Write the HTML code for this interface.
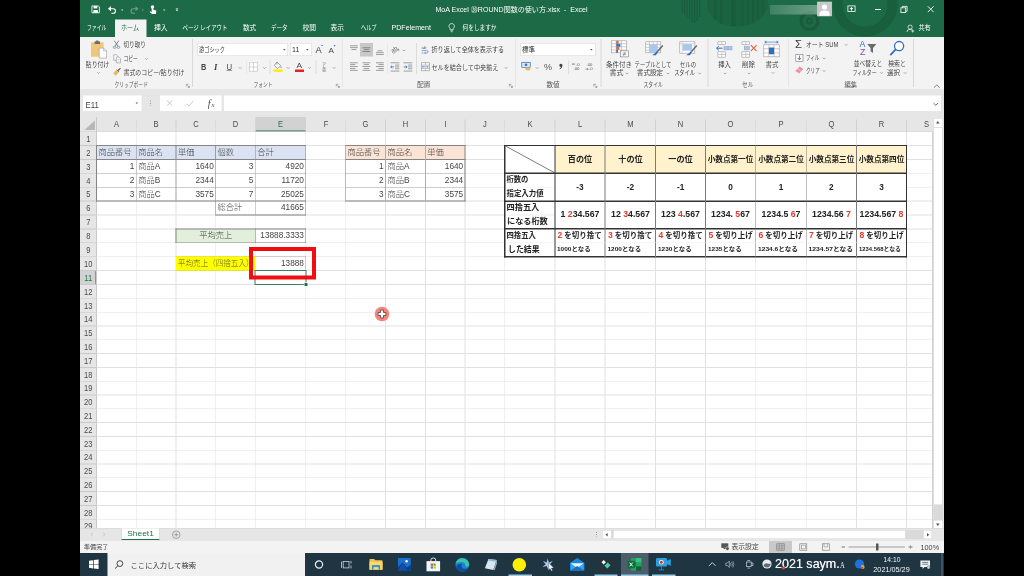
<!DOCTYPE html>
<html lang="ja"><head><meta charset="utf-8"><title>MoA Excel ROUND関数の使い方.xlsx - Excel</title>
<style>
html,body{margin:0;padding:0;background:#000;}
body{width:1024px;height:576px;position:relative;overflow:hidden;font-family:"Liberation Sans","Noto Sans CJK JP",sans-serif;}
.a{position:absolute;box-sizing:border-box;}
.t{position:absolute;white-space:nowrap;font-family:"Liberation Sans","Noto Sans CJK JP",sans-serif;}
svg{overflow:visible;}
#w{position:absolute;left:-8px;top:-8px;width:1040px;height:592px;overflow:hidden;filter:blur(0.5px);background:#000;}
#i{position:absolute;left:8px;top:8px;width:2048px;height:1152px;transform:scale(0.5);transform-origin:0 0;}
.r{color:#e03a2c;}
.b{font-size:17.2px;}
</style></head>
<body>
<div id="w"><div id="i">
<div class="a" style="left:160.00px;top:0.00px;width:1728.00px;height:1152.00px;background:#fff;"></div>
<div class="a" style="left:160.00px;top:-16.00px;width:1728.00px;height:90.40px;background:#1d6a46;"></div>
<svg class="a" style="left:1360.00px;top:0.00px;clip-path:inset(0 0 0 0);" width="528.00" height="74.40" viewBox="0 0 264 37.2">
<g fill="#195c3c">
<rect x="1.5" y="0" width="1.2" height="13"/><rect x="4" y="0" width="1.2" height="15"/><rect x="6.5" y="0" width="1.2" height="17"/><rect x="9" y="0" width="1.2" height="19"/><rect x="11.5" y="0" width="1.2" height="22"/><rect x="14" y="0" width="1.2" height="23"/><rect x="16.5" y="0" width="1.2" height="21"/><rect x="19" y="0" width="1.2" height="17"/>
<path d="M27 0 L27 6 Q31 25 57 26.6 Q83 25 88 6 L88 0 Z" opacity="0.55"/>
<rect x="51" y="0" width="5" height="26.4"/><rect x="40" y="0" width="2.4" height="24"/><rect x="34" y="0" width="2" height="20"/><rect x="62" y="0" width="1.6" height="26"/><rect x="67" y="0" width="1.6" height="25"/><rect x="72" y="0" width="1.6" height="23"/><rect x="77" y="0" width="1.6" height="20"/><rect x="82" y="0" width="1.6" height="15"/>
</g>
<g fill="none" stroke="#195c3c">
<circle cx="129.5" cy="21" r="8.4" stroke-width="3.4"/><circle cx="129.5" cy="21" r="2.4" stroke-width="2"/>
<circle cx="185" cy="4" r="27.5" stroke-width="10" opacity="0.8"/>
</g>
</svg>
<svg class="a" style="left:183.20px;top:10.80px;" width="16.60" height="15.40" viewBox="0 0 8 7.4"><path d="M0.4 0.4H6.6L7.6 1.4V7H0.4Z" fill="none" stroke="#fff" stroke-width="0.8"/><rect x="2" y="0.6" width="3.6" height="2.2" fill="#fff"/><rect x="1.8" y="4.4" width="4.4" height="2.6" fill="#fff"/></svg>
<svg class="a" style="left:216.00px;top:11.00px;" width="17.00" height="16.00" viewBox="0 0 8.5 8"><path d="M1 3.2H5.2A2.3 2.3 0 0 1 5.2 7.8H3.4" fill="none" stroke="#fff" stroke-width="1.1"/><path d="M0 3.2L3 0.6V5.8Z" fill="#fff"/></svg>
<svg class="a" style="left:241.60px;top:18.72px;" width="4.80" height="2.88" viewBox="0 0 3 1.8"><path d="M0 0 L3 0 L1.5 1.8 Z" fill="#cfe3d8"/></svg>
<svg class="a" style="left:260.00px;top:11.00px;" width="17.00" height="16.00" viewBox="0 0 8.5 8"><g opacity="0.35"><path d="M7.5 3.2H3.3A2.3 2.3 0 0 0 3.3 7.8H5.1" fill="none" stroke="#fff" stroke-width="1.1"/><path d="M8.5 3.2L5.5 0.6V5.8Z" fill="#fff"/></g></svg>
<svg class="a" style="left:282.60px;top:18.72px;" width="4.80" height="2.88" viewBox="0 0 3 1.8"><path d="M0 0 L3 0 L1.5 1.8 Z" fill="#6fa58a"/></svg>
<svg class="a" style="left:299.00px;top:10.00px;" width="14.00" height="18.00" viewBox="0 0 7 9"><circle cx="3" cy="2" r="1.7" fill="#fff"/><path d="M2.2 3V7L0.6 6.2L0.2 7L2.6 9H6.4L6.8 5.6L3.8 4.8V3Z" fill="#fff"/></svg>
<svg class="a" style="left:325.60px;top:18.72px;" width="4.80" height="2.88" viewBox="0 0 3 1.8"><path d="M0 0 L3 0 L1.5 1.8 Z" fill="#cfe3d8"/></svg>
<svg class="a" style="left:351.20px;top:17.20px;" width="6.00" height="6.00" viewBox="0 0 3 3"><rect x="0.3" y="0" width="2.4" height="0.7" fill="#fff"/><path d="M0.2 1.3H2.8L1.5 2.8Z" fill="#fff"/></svg>
<div id="t1" class="t" style="left:1023.00px;top:9.02px;height:19.80px;line-height:19.80px;font-size:13.20px;color:#fff;font-weight:400;transform-origin:center center;transform:translateX(-50%) scaleX(1.0693);">MoA Excel ㉘ROUND関数の使い方.xlsx&nbsp; -&nbsp; Excel</div>
<div class="a" style="left:1540.00px;top:10.00px;width:95.00px;height:19.00px;background:linear-gradient(90deg,rgba(255,255,255,0.16),rgba(255,255,255,0.36));filter:blur(1.20px);"></div>
<div class="a" style="left:1635.40px;top:4.00px;width:28.00px;height:28.00px;background:#e9e9e9;"></div>
<svg class="a" style="left:1635.40px;top:4.00px;background:#c9c9c9;" width="28.00" height="28.00" viewBox="0 0 14 14"><circle cx="7" cy="5" r="2.6" fill="#fff"/><path d="M2 14V11.5Q2 8.4 7 8.4Q12 8.4 12 11.5V14Z" fill="#fff"/><rect x="0" y="0" width="14" height="14" fill="none" stroke="#cfcfcf" stroke-width="0.6"/></svg>
<svg class="a" style="left:1695.00px;top:11.00px;" width="16.00" height="14.00" viewBox="0 0 8 7"><rect x="0.4" y="0.4" width="7.2" height="5.6" fill="none" stroke="#fff" stroke-width="0.8"/><path d="M4 1.6L5.8 3.4H4.6V5H3.4V3.4H2.2Z" fill="#fff"/></svg>
<div class="a" style="left:1749.60px;top:18.00px;width:12.40px;height:1.60px;background:#fff;"></div>
<svg class="a" style="left:1801.00px;top:11.60px;" width="14.00" height="14.00" viewBox="0 0 7 7"><rect x="0.4" y="1.8" width="4.8" height="4.8" fill="none" stroke="#fff" stroke-width="0.8"/><path d="M1.8 1.8V0.4H6.6V5.2H5.2" fill="none" stroke="#fff" stroke-width="0.8"/></svg>
<svg class="a" style="left:1855.00px;top:12.00px;" width="12.80" height="12.80" viewBox="0 0 6.4 6.4"><path d="M0.3 0.3L6.1 6.1M6.1 0.3L0.3 6.1" stroke="#fff" stroke-width="0.9"/></svg>
<svg class="a" style="left:1813.00px;top:49.00px;" width="16.00" height="16.00" viewBox="0 0 8 8"><circle cx="3.6" cy="2.6" r="2.1" fill="none" stroke="#fff" stroke-width="0.7"/><path d="M0.4 7.6Q0.6 4.8 3.6 4.8Q5 4.8 5.6 5.4" fill="none" stroke="#fff" stroke-width="0.7"/><path d="M6.2 5V8M4.7 6.5H7.7" stroke="#fff" stroke-width="0.7"/></svg>
<div id="t2" class="t" style="left:1836.60px;top:45.47px;height:19.20px;line-height:19.20px;font-size:12.80px;color:#fff;font-weight:400;transform-origin:left center;transform:scaleX(0.9534);">共有</div>
<div class="a" style="left:230.00px;top:39.00px;width:62.60px;height:36.00px;background:#f3f3f3;"></div>
<div id="t3" class="t" style="left:174.00px;top:46.33px;height:20.25px;line-height:20.25px;font-size:13.50px;color:#fff;font-weight:400;transform-origin:left center;transform:scaleX(0.7148);">ファイル</div>
<div id="t4" class="t" style="left:242.00px;top:46.33px;height:20.25px;line-height:20.25px;font-size:13.50px;color:#1d6a46;font-weight:400;transform-origin:left center;transform:scaleX(0.8975);">ホーム</div>
<div id="t5" class="t" style="left:307.50px;top:46.33px;height:20.25px;line-height:20.25px;font-size:13.50px;color:#fff;font-weight:400;transform-origin:left center;transform:scaleX(1.0148);">挿入</div>
<div id="t6" class="t" style="left:365.00px;top:46.33px;height:20.25px;line-height:20.25px;font-size:13.50px;color:#fff;font-weight:400;transform-origin:left center;transform:scaleX(0.8073);">ページ レイアウト</div>
<div id="t7" class="t" style="left:486.00px;top:46.33px;height:20.25px;line-height:20.25px;font-size:13.50px;color:#fff;font-weight:400;transform-origin:left center;transform:scaleX(0.9778);">数式</div>
<div id="t8" class="t" style="left:542.00px;top:46.33px;height:20.25px;line-height:20.25px;font-size:13.50px;color:#fff;font-weight:400;transform-origin:left center;transform:scaleX(0.8148);">データ</div>
<div id="t9" class="t" style="left:605.00px;top:46.33px;height:20.25px;line-height:20.25px;font-size:13.50px;color:#fff;font-weight:400;transform-origin:left center;">校閲</div>
<div id="t10" class="t" style="left:661.00px;top:46.33px;height:20.25px;line-height:20.25px;font-size:13.50px;color:#fff;font-weight:400;transform-origin:left center;">表示</div>
<div id="t11" class="t" style="left:722.00px;top:46.33px;height:20.25px;line-height:20.25px;font-size:13.50px;color:#fff;font-weight:400;transform-origin:left center;transform:scaleX(0.7654);">ヘルプ</div>
<div id="t12" class="t" style="left:783.00px;top:46.33px;height:20.25px;line-height:20.25px;font-size:13.50px;color:#fff;font-weight:400;transform-origin:left center;transform:scaleX(1.0529);">PDFelement</div>
<div id="t13" class="t" style="left:925.00px;top:46.33px;height:20.25px;line-height:20.25px;font-size:13.50px;color:#fff;font-weight:400;transform-origin:left center;transform:scaleX(0.8395);">何をしますか</div>
<svg class="a" style="left:897.00px;top:46.00px;" width="12.80" height="18.80" viewBox="0 0 6.4 9.4"><path d="M3.2 0.5A2.7 2.7 0 0 1 4.8 5.4V6.8H1.6V5.4A2.7 2.7 0 0 1 3.2 0.5Z" fill="none" stroke="#fff" stroke-width="0.7"/><path d="M1.9 7.8H4.5M2.3 8.8H4.1" stroke="#fff" stroke-width="0.6"/></svg>
<div class="a" style="left:160.00px;top:74.40px;width:1728.00px;height:103.60px;background:#f3f3f3;"></div>
<div class="a" style="left:160.00px;top:178.00px;width:1728.00px;height:56.00px;background:#e6e6e6;"></div>
<div class="a" style="left:384.20px;top:78.00px;width:1.60px;height:96.00px;background:#d9d9d9;"></div>
<div class="a" style="left:683.80px;top:78.00px;width:1.60px;height:96.00px;background:#d9d9d9;"></div>
<div class="a" style="left:1030.80px;top:78.00px;width:1.60px;height:96.00px;background:#d9d9d9;"></div>
<div class="a" style="left:1201.00px;top:78.00px;width:1.60px;height:96.00px;background:#d9d9d9;"></div>
<div class="a" style="left:1415.40px;top:78.00px;width:1.60px;height:96.00px;background:#d9d9d9;"></div>
<div class="a" style="left:1576.80px;top:78.00px;width:1.60px;height:96.00px;background:#d9d9d9;"></div>
<div class="a" style="left:1826.40px;top:78.00px;width:1.60px;height:96.00px;background:#d9d9d9;"></div>
<div id="t14" class="t" style="left:228.60px;top:159.27px;height:19.20px;line-height:19.20px;font-size:12.80px;color:#555;font-weight:400;transform-origin:left center;transform:scaleX(0.7457);">クリップボード</div>
<div id="t15" class="t" style="left:507.00px;top:159.27px;height:19.20px;line-height:19.20px;font-size:12.80px;color:#555;font-weight:400;transform-origin:left center;transform:scaleX(0.7424);">フォント</div>
<div id="t16" class="t" style="left:834.00px;top:159.27px;height:19.20px;line-height:19.20px;font-size:12.80px;color:#555;font-weight:400;transform-origin:left center;transform:scaleX(1.0549);">配置</div>
<div id="t17" class="t" style="left:1093.00px;top:159.27px;height:19.20px;line-height:19.20px;font-size:12.80px;color:#555;font-weight:400;transform-origin:left center;transform:scaleX(1.0315);">数値</div>
<div id="t18" class="t" style="left:1287.20px;top:159.27px;height:19.20px;line-height:19.20px;font-size:12.80px;color:#555;font-weight:400;transform-origin:left center;transform:scaleX(0.7580);">スタイル</div>
<div id="t19" class="t" style="left:1484.00px;top:159.27px;height:19.20px;line-height:19.20px;font-size:12.80px;color:#555;font-weight:400;transform-origin:left center;transform:scaleX(0.8908);">セル</div>
<div id="t20" class="t" style="left:1688.80px;top:159.27px;height:19.20px;line-height:19.20px;font-size:12.80px;color:#555;font-weight:400;transform-origin:left center;transform:scaleX(0.9846);">編集</div>
<svg class="a" style="left:372.40px;top:167.60px;" width="7.60" height="7.60" viewBox="0 0 3.8 3.8"><path d="M0.3 2.4V0.3H2.4" fill="none" stroke="#777" stroke-width="0.6"/><path d="M1.4 1.4L3.2 3.2M3.4 1.8V3.4H1.8" fill="none" stroke="#777" stroke-width="0.6"/></svg>
<svg class="a" style="left:672.20px;top:167.60px;" width="7.60" height="7.60" viewBox="0 0 3.8 3.8"><path d="M0.3 2.4V0.3H2.4" fill="none" stroke="#777" stroke-width="0.6"/><path d="M1.4 1.4L3.2 3.2M3.4 1.8V3.4H1.8" fill="none" stroke="#777" stroke-width="0.6"/></svg>
<svg class="a" style="left:1018.40px;top:167.60px;" width="7.60" height="7.60" viewBox="0 0 3.8 3.8"><path d="M0.3 2.4V0.3H2.4" fill="none" stroke="#777" stroke-width="0.6"/><path d="M1.4 1.4L3.2 3.2M3.4 1.8V3.4H1.8" fill="none" stroke="#777" stroke-width="0.6"/></svg>
<svg class="a" style="left:1187.20px;top:167.60px;" width="7.60" height="7.60" viewBox="0 0 3.8 3.8"><path d="M0.3 2.4V0.3H2.4" fill="none" stroke="#777" stroke-width="0.6"/><path d="M1.4 1.4L3.2 3.2M3.4 1.8V3.4H1.8" fill="none" stroke="#777" stroke-width="0.6"/></svg>
<svg class="a" style="left:1867.20px;top:168.80px;" width="13.20" height="7.20" viewBox="0 0 6.6 3.6"><path d="M0.4 3.2L3.3 0.5L6.2 3.2" fill="none" stroke="#666" stroke-width="0.8"/></svg>
<svg class="a" style="left:181.80px;top:81.20px;" width="32.00" height="36.00" viewBox="0 0 16 18">
<rect x="0" y="1.8" width="12.6" height="14.4" fill="#eec77c"/>
<rect x="3.6" y="0.9" width="5.4" height="2.6" fill="#6a6a6a"/><rect x="5.2" y="0" width="2.2" height="1.4" fill="#6a6a6a"/>
<path d="M8.2 7.6H12.6L15.6 10.4V17.6H8.2Z" fill="#fff" stroke="#9a9a9a" stroke-width="0.6"/><path d="M12.6 7.6V10.4H15.6" fill="none" stroke="#9a9a9a" stroke-width="0.6"/></svg>
<div id="t21" class="t" style="left:194.60px;top:118.53px;height:20.25px;line-height:20.25px;font-size:13.50px;color:#444;font-weight:400;transform-origin:center center;transform:translateX(-50%) scaleX(0.8667);">貼り付け</div>
<svg class="a" style="left:194.40px;top:144.40px;" width="6.40" height="4.00" viewBox="0 0 4 2.4"><path d="M0.4 0.3 L2 1.9 L3.6 0.3" fill="none" stroke="#777" stroke-width="0.8"/></svg>
<svg class="a" style="left:226.40px;top:81.20px;" width="14.00" height="16.80" viewBox="0 0 7 8.4"><path d="M1.2 0.2L5 5.6M5.8 0.2L2 5.6" stroke="#555" stroke-width="0.7" fill="none"/><ellipse cx="1.6" cy="6.8" rx="1.3" ry="1.1" fill="none" stroke="#4a86c8" stroke-width="0.7"/><ellipse cx="5.4" cy="6.8" rx="1.3" ry="1.1" fill="none" stroke="#4a86c8" stroke-width="0.7"/></svg>
<div id="t22" class="t" style="left:247.20px;top:80.13px;height:20.25px;line-height:20.25px;font-size:13.50px;color:#444;font-weight:400;transform-origin:left center;transform:scaleX(0.8259);">切り取り</div>
<svg class="a" style="left:226.80px;top:108.60px;" width="14.80" height="17.20" viewBox="0 0 7.4 8.6"><path d="M0.3 0.3H3L4.4 1.7V5.8H0.3Z" fill="#fff" stroke="#8a8a8a" stroke-width="0.6"/><path d="M2.8 2.6H5.6L7 4V8.3H2.8Z" fill="#fff" stroke="#8a8a8a" stroke-width="0.6"/><path d="M3.6 5H6.2M3.6 6.4H6.2" stroke="#9cc3e6" stroke-width="0.5"/></svg>
<div id="t23" class="t" style="left:247.20px;top:107.53px;height:20.25px;line-height:20.25px;font-size:13.50px;color:#444;font-weight:400;transform-origin:left center;transform:scaleX(0.7111);">コピー</div>
<svg class="a" style="left:289.60px;top:116.00px;" width="6.40" height="4.00" viewBox="0 0 4 2.4"><path d="M0.4 0.3 L2 1.9 L3.6 0.3" fill="none" stroke="#777" stroke-width="0.8"/></svg>
<svg class="a" style="left:226.40px;top:135.20px;" width="16.00" height="16.80" viewBox="0 0 8 8.4"><path d="M4.6 2.4L7.2 0.2L7.8 0.9L5.6 3.4Z" fill="#555"/><path d="M0.2 5.6L3.8 2.2L6 4.4L2.6 8.2Z" fill="#e8b85a"/><path d="M3.8 2.2L6 4.4" stroke="#555" stroke-width="0.8"/></svg>
<div id="t24" class="t" style="left:247.20px;top:134.73px;height:20.25px;line-height:20.25px;font-size:13.50px;color:#444;font-weight:400;transform-origin:left center;transform:scaleX(0.8792);">書式のコピー/貼り付け</div>
<div class="a" style="left:394.80px;top:86.00px;width:181.20px;height:26.40px;background:#fff;border:1.60px solid #d2d2d2;"></div>
<div id="t25" class="t" style="left:398.40px;top:89.93px;height:20.25px;line-height:20.25px;font-size:13.50px;color:#333;font-weight:400;transform-origin:left center;transform:scaleX(0.7704);">游ゴシック</div>
<svg class="a" style="left:566.10px;top:98.16px;" width="5.40" height="3.24" viewBox="0 0 3 1.8"><path d="M0 0 L3 0 L1.5 1.8 Z" fill="#555"/></svg>
<div class="a" style="left:580.00px;top:86.00px;width:43.20px;height:26.40px;background:#fff;border:1.60px solid #d2d2d2;"></div>
<div id="t26" class="t" style="left:583.60px;top:89.11px;height:21.00px;line-height:21.00px;font-size:14.00px;color:#333;font-weight:400;transform-origin:left center;transform:scaleX(1.0174);">11</div>
<svg class="a" style="left:612.30px;top:98.16px;" width="5.40" height="3.24" viewBox="0 0 3 1.8"><path d="M0 0 L3 0 L1.5 1.8 Z" fill="#555"/></svg>
<div id="t27" class="t" style="left:630.60px;top:86.77px;height:27.00px;line-height:27.00px;font-size:18.00px;color:#444;font-weight:400;transform-origin:left center;transform:scaleX(1.0320);">A</div>
<svg class="a" style="left:642.40px;top:89.20px;" width="4.40" height="3.20" viewBox="0 0 2.2 1.6"><path d="M0 1.6L1.1 0L2.2 1.6Z" fill="#3b78c3"/></svg>
<div id="t28" class="t" style="left:656.80px;top:89.75px;height:22.80px;line-height:22.80px;font-size:15.20px;color:#444;font-weight:400;transform-origin:left center;transform:scaleX(1.0650);">A</div>
<svg class="a" style="left:667.20px;top:90.40px;" width="4.40" height="3.20" viewBox="0 0 2.2 1.6"><path d="M0 0L1.1 1.6L2.2 0Z" fill="#3b78c3"/></svg>
<div id="t29" class="t" style="left:402.40px;top:121.02px;height:26.40px;line-height:26.40px;font-size:17.60px;color:#444;font-weight:700;transform-origin:left center;transform:scaleX(0.8334);">B</div>
<div id="t30" class="t" style="left:428.00px;top:121.02px;height:26.40px;line-height:26.40px;font-size:17.60px;color:#444;font-weight:700;transform-origin:left center;transform:scaleX(0.9913);font-style:italic;font-family:'Liberation Serif',serif;">I</div>
<div id="t31" class="t" style="left:453.00px;top:121.13px;height:25.20px;line-height:25.20px;font-size:16.80px;color:#444;font-weight:400;transform-origin:left center;transform:scaleX(0.9237);text-decoration:underline;text-underline-offset:1.20px;">U</div>
<svg class="a" style="left:476.80px;top:133.60px;" width="6.40" height="4.00" viewBox="0 0 4 2.4"><path d="M0.4 0.3 L2 1.9 L3.6 0.3" fill="none" stroke="#777" stroke-width="0.8"/></svg>
<div class="a" style="left:491.60px;top:121.00px;width:1.40px;height:27.00px;background:#dcdcdc;"></div>
<svg class="a" style="left:498.00px;top:125.20px;" width="18.00" height="18.00" viewBox="0 0 9 9"><rect x="0.3" y="0.3" width="8.4" height="8.4" fill="#fff" stroke="#bdbdbd" stroke-width="0.6"/><path d="M4.5 0.3V8.7M0.3 4.5H8.7" stroke="#bdbdbd" stroke-width="0.6"/></svg>
<svg class="a" style="left:525.60px;top:133.60px;" width="6.40" height="4.00" viewBox="0 0 4 2.4"><path d="M0.4 0.3 L2 1.9 L3.6 0.3" fill="none" stroke="#777" stroke-width="0.8"/></svg>
<div class="a" style="left:539.20px;top:121.00px;width:1.40px;height:27.00px;background:#dcdcdc;"></div>
<svg class="a" style="left:547.20px;top:123.20px;" width="18.40" height="20.80" viewBox="0 0 9.2 10.4"><path d="M3.4 0.6L7.2 4.2L4 7L0.8 4Z" fill="#fff" stroke="#666" stroke-width="0.6"/><path d="M3.4 0.6V3.2" stroke="#666" stroke-width="0.6"/><path d="M7.4 4.6Q8.6 6.2 7.6 6.8Q6.6 6.4 7.4 4.6Z" fill="#3b78c3"/><rect x="0" y="7.9" width="9.2" height="2.4" fill="#ffeb00"/></svg>
<svg class="a" style="left:572.80px;top:133.60px;" width="6.40" height="4.00" viewBox="0 0 4 2.4"><path d="M0.4 0.3 L2 1.9 L3.6 0.3" fill="none" stroke="#777" stroke-width="0.8"/></svg>
<div id="t32" class="t" style="left:592.60px;top:119.29px;height:23.40px;line-height:23.40px;font-size:15.60px;color:#444;font-weight:400;transform-origin:left center;transform:scaleX(1.0763);">A</div>
<div class="a" style="left:590.40px;top:139.00px;width:17.80px;height:4.80px;background:#e8211d;"></div>
<svg class="a" style="left:616.40px;top:133.60px;" width="6.40" height="4.00" viewBox="0 0 4 2.4"><path d="M0.4 0.3 L2 1.9 L3.6 0.3" fill="none" stroke="#777" stroke-width="0.8"/></svg>
<div class="a" style="left:631.20px;top:121.00px;width:1.40px;height:27.00px;background:#dcdcdc;"></div>
<div id="t33" class="t" style="left:644.40px;top:121.87px;height:12.60px;line-height:12.60px;font-size:8.40px;color:#555;font-weight:400;transform-origin:left center;transform:scaleX(0.9552);">ア</div>
<div id="t34" class="t" style="left:644.40px;top:131.25px;height:15.00px;line-height:15.00px;font-size:10.00px;color:#777;font-weight:400;transform-origin:left center;transform:scaleX(0.9200);">亜</div>
<svg class="a" style="left:664.80px;top:133.60px;" width="6.40" height="4.00" viewBox="0 0 4 2.4"><path d="M0.4 0.3 L2 1.9 L3.6 0.3" fill="none" stroke="#777" stroke-width="0.8"/></svg>
<div class="a" style="left:720.40px;top:86.00px;width:25.20px;height:27.20px;background:#c8c8c8;"></div>
<svg class="a" style="left:699.60px;top:91.20px;" width="15.60" height="11.40" viewBox="0 0 7.8 5.699999999999999"><rect x="0.00" y="0.00" width="7.80" height="0.7" fill="#7a7a7a"/><rect x="0.00" y="1.90" width="7.80" height="0.7" fill="#7a7a7a"/><rect x="1.40" y="3.80" width="5.00" height="0.7" fill="#7a7a7a"/></svg>
<svg class="a" style="left:725.20px;top:95.20px;" width="15.60" height="11.40" viewBox="0 0 7.8 5.699999999999999"><rect x="0.00" y="0.00" width="7.80" height="0.7" fill="#666"/><rect x="1.40" y="1.90" width="5.00" height="0.7" fill="#666"/><rect x="0.00" y="3.80" width="7.80" height="0.7" fill="#666"/></svg>
<svg class="a" style="left:751.60px;top:100.80px;" width="15.60" height="11.40" viewBox="0 0 7.8 5.699999999999999"><rect x="1.40" y="0.00" width="5.00" height="0.7" fill="#7a7a7a"/><rect x="0.00" y="1.90" width="7.80" height="0.7" fill="#7a7a7a"/><rect x="0.00" y="3.80" width="7.80" height="0.7" fill="#7a7a7a"/></svg>
<div class="a" style="left:774.60px;top:87.00px;width:1.40px;height:26.00px;background:#dcdcdc;"></div>
<svg class="a" style="left:783.00px;top:90.80px;" width="16.00" height="17.20" viewBox="0 0 8 8.6"><text x="0" y="6" font-size="6" fill="#666" transform="rotate(-35 3 5)" font-family="Liberation Sans,sans-serif">ab</text><path d="M2 8.2L7.4 3.6M7.4 3.6L5.4 3.8M7.4 3.6L7 5.6" stroke="#777" stroke-width="0.6" fill="none"/></svg>
<svg class="a" style="left:804.80px;top:98.80px;" width="6.40" height="4.00" viewBox="0 0 4 2.4"><path d="M0.4 0.3 L2 1.9 L3.6 0.3" fill="none" stroke="#777" stroke-width="0.8"/></svg>
<svg class="a" style="left:699.60px;top:124.80px;" width="15.60" height="18.50" viewBox="0 0 7.8 9.25"><rect x="0.00" y="0.00" width="7.80" height="0.7" fill="#7a7a7a"/><rect x="0.00" y="1.85" width="5.40" height="0.7" fill="#7a7a7a"/><rect x="0.00" y="3.70" width="7.80" height="0.7" fill="#7a7a7a"/><rect x="0.00" y="5.55" width="5.40" height="0.7" fill="#7a7a7a"/><rect x="0.00" y="7.40" width="7.80" height="0.7" fill="#7a7a7a"/></svg>
<svg class="a" style="left:725.20px;top:124.80px;" width="15.60" height="18.50" viewBox="0 0 7.8 9.25"><rect x="0.00" y="0.00" width="7.80" height="0.7" fill="#7a7a7a"/><rect x="1.20" y="1.85" width="5.40" height="0.7" fill="#7a7a7a"/><rect x="0.00" y="3.70" width="7.80" height="0.7" fill="#7a7a7a"/><rect x="1.20" y="5.55" width="5.40" height="0.7" fill="#7a7a7a"/><rect x="0.00" y="7.40" width="7.80" height="0.7" fill="#7a7a7a"/></svg>
<svg class="a" style="left:751.60px;top:124.80px;" width="15.60" height="18.50" viewBox="0 0 7.8 9.25"><rect x="0.00" y="0.00" width="7.80" height="0.7" fill="#7a7a7a"/><rect x="2.40" y="1.85" width="5.40" height="0.7" fill="#7a7a7a"/><rect x="0.00" y="3.70" width="7.80" height="0.7" fill="#7a7a7a"/><rect x="2.40" y="5.55" width="5.40" height="0.7" fill="#7a7a7a"/><rect x="0.00" y="7.40" width="7.80" height="0.7" fill="#7a7a7a"/></svg>
<div class="a" style="left:774.60px;top:121.00px;width:1.40px;height:27.00px;background:#dcdcdc;"></div>
<svg class="a" style="left:781.20px;top:124.80px;" width="17.60" height="18.00" viewBox="0 0 8.8 9"><rect x="0" y="0" width="8.8" height="0.7" fill="#7a7a7a"/><rect x="0" y="8.2" width="8.8" height="0.7" fill="#7a7a7a"/><rect x="4.6" y="2.2" width="4.2" height="0.7" fill="#7a7a7a"/><rect x="4.6" y="4.1" width="4.2" height="0.7" fill="#7a7a7a"/><rect x="4.6" y="6" width="4.2" height="0.7" fill="#7a7a7a"/><path d="M3.6 4.4H0.2M1.6 3L0.2 4.4L1.6 5.8" stroke="#2f6fbd" stroke-width="0.8" fill="none"/></svg>
<svg class="a" style="left:807.20px;top:124.80px;" width="17.60" height="18.00" viewBox="0 0 8.8 9"><rect x="0" y="0" width="8.8" height="0.7" fill="#7a7a7a"/><rect x="0" y="8.2" width="8.8" height="0.7" fill="#7a7a7a"/><rect x="4.6" y="2.2" width="4.2" height="0.7" fill="#7a7a7a"/><rect x="4.6" y="4.1" width="4.2" height="0.7" fill="#7a7a7a"/><rect x="4.6" y="6" width="4.2" height="0.7" fill="#7a7a7a"/><path d="M0.2 4.4H3.6M2.2 3L3.6 4.4L2.2 5.8" stroke="#2f6fbd" stroke-width="0.8" fill="none"/></svg>
<div class="a" style="left:832.20px;top:87.00px;width:1.40px;height:61.00px;background:#dcdcdc;"></div>
<svg class="a" style="left:843.20px;top:90.40px;" width="14.00" height="18.00" viewBox="0 0 7 9"><text x="0" y="3.8" font-size="4.4" fill="#555" font-family="Liberation Sans,sans-serif">ab</text><path d="M0.2 5.6H5.2Q6.6 5.6 6.6 6.8Q6.6 8 5.2 8H3.2" fill="none" stroke="#2f6fbd" stroke-width="0.6"/><path d="M4 7L3 8L4 9" fill="none" stroke="#2f6fbd" stroke-width="0.6"/><path d="M0.2 8H2" stroke="#555" stroke-width="0.6"/></svg>
<div id="t35" class="t" style="left:862.80px;top:89.93px;height:20.25px;line-height:20.25px;font-size:13.50px;color:#444;font-weight:400;transform-origin:left center;transform:scaleX(0.8985);">折り返して全体を表示する</div>
<svg class="a" style="left:841.60px;top:125.20px;" width="17.20" height="17.20" viewBox="0 0 8.6 8.6"><rect x="0.3" y="0.3" width="8" height="8" fill="#fff" stroke="#8a8a8a" stroke-width="0.6"/><path d="M0.3 2.6H8.3M0.3 6H8.3M4.3 0.3V2.6M4.3 6V8.3" stroke="#8a8a8a" stroke-width="0.5"/><path d="M1.4 4.3H7.2M2.4 3.5L1.4 4.3L2.4 5.1M6.2 3.5L7.2 4.3L6.2 5.1" stroke="#2f6fbd" stroke-width="0.6" fill="none"/></svg>
<div id="t36" class="t" style="left:862.80px;top:124.73px;height:20.25px;line-height:20.25px;font-size:13.50px;color:#444;font-weight:400;transform-origin:left center;transform:scaleX(0.9020);">セルを結合して中央揃え</div>
<svg class="a" style="left:1009.00px;top:133.60px;" width="6.40" height="4.00" viewBox="0 0 4 2.4"><path d="M0.4 0.3 L2 1.9 L3.6 0.3" fill="none" stroke="#777" stroke-width="0.8"/></svg>
<div class="a" style="left:1041.00px;top:86.00px;width:150.00px;height:26.40px;background:#fff;border:1.60px solid #d2d2d2;"></div>
<div id="t37" class="t" style="left:1044.40px;top:89.93px;height:20.25px;line-height:20.25px;font-size:13.50px;color:#333;font-weight:400;transform-origin:left center;transform:scaleX(0.9630);">標準</div>
<svg class="a" style="left:1179.70px;top:98.16px;" width="5.40" height="3.24" viewBox="0 0 3 1.8"><path d="M0 0 L3 0 L1.5 1.8 Z" fill="#555"/></svg>
<svg class="a" style="left:1043.20px;top:124.40px;" width="19.20" height="17.60" viewBox="0 0 9.6 8.8"><rect x="0.3" y="0.3" width="8.4" height="5" fill="#dbe9f7" stroke="#2f6fbd" stroke-width="0.7"/><circle cx="4.5" cy="2.8" r="1.3" fill="#2f6fbd"/><ellipse cx="6.4" cy="6.6" rx="2.6" ry="1" fill="#e8b85a"/><ellipse cx="6.4" cy="7.6" rx="2.6" ry="1" fill="#e8b85a"/></svg>
<svg class="a" style="left:1070.60px;top:133.60px;" width="6.40" height="4.00" viewBox="0 0 4 2.4"><path d="M0.4 0.3 L2 1.9 L3.6 0.3" fill="none" stroke="#777" stroke-width="0.8"/></svg>
<div id="t38" class="t" style="left:1087.80px;top:121.68px;height:25.80px;line-height:25.80px;font-size:17.20px;color:#555;font-weight:400;transform-origin:left center;transform:scaleX(1.0460);">%</div>
<svg class="a" style="left:1117.60px;top:127.20px;" width="7.20" height="12.00" viewBox="0 0 3.6 6"><path d="M1.9 0.2A1.6 1.6 0 0 1 3.5 1.9Q3.5 4.2 0.9 5.8L0.5 5.3Q1.9 4.2 1.9 3.4A1.6 1.6 0 0 1 1.9 0.2Z" fill="#444"/></svg>
<div class="a" style="left:1136.40px;top:121.00px;width:1.40px;height:27.00px;background:#dcdcdc;"></div>
<svg class="a" style="left:1144.00px;top:124.80px;" width="18.00" height="17.20" viewBox="0 0 9 8.6"><path d="M3.2 1.6H0.4M1.4 0.6L0.4 1.6L1.4 2.6" stroke="#2f6fbd" stroke-width="0.6" fill="none"/><text x="4" y="3.4" font-size="4.2" fill="#555" font-family="Liberation Sans,sans-serif">.0</text><text x="1.6" y="8" font-size="4.2" fill="#555" font-family="Liberation Sans,sans-serif">.00</text></svg>
<svg class="a" style="left:1170.40px;top:124.80px;" width="18.00" height="17.20" viewBox="0 0 9 8.6"><path d="M0.4 6.6H3.2M2.2 5.6L3.2 6.6L2.2 7.6" stroke="#2f6fbd" stroke-width="0.6" fill="none"/><text x="1.6" y="3.4" font-size="4.2" fill="#555" font-family="Liberation Sans,sans-serif">.00</text><text x="4.2" y="8" font-size="4.2" fill="#555" font-family="Liberation Sans,sans-serif">.0</text></svg>
<svg class="a" style="left:1222.00px;top:81.20px;" width="36.00" height="34.00" viewBox="0 0 18 17"><g><rect x="0.3" y="0.3" width="15.0" height="12.0" fill="#fff" stroke="#9a9a9a" stroke-width="0.6"/><path d="M5.20 0.3V12.299999999999999" stroke="#9a9a9a" stroke-width="0.5"/><path d="M10.40 0.3V12.299999999999999" stroke="#9a9a9a" stroke-width="0.5"/><path d="M0.3 3.15H15.299999999999999" stroke="#9a9a9a" stroke-width="0.5"/><path d="M0.3 6.30H15.299999999999999" stroke="#9a9a9a" stroke-width="0.5"/><path d="M0.3 9.45H15.299999999999999" stroke="#9a9a9a" stroke-width="0.5"/></g><rect x="5.2" y="0.3" width="2.4" height="3" fill="#e0643c"/><rect x="5.2" y="3.3" width="4.2" height="3" fill="#3b78c3"/><rect x="5.2" y="6.4" width="3" height="3" fill="#e0643c"/><rect x="5.2" y="9.5" width="1.8" height="2.8" fill="#3b78c3"/><rect x="9.4" y="10.4" width="8" height="6" fill="#fff" stroke="#777" stroke-width="0.6"/><path d="M11.6 12.6H15.2M11.6 14.2H15.2M14.4 11.6L12.4 15.2" stroke="#555" stroke-width="0.5"/></svg>
<div id="t39" class="t" style="left:1238.40px;top:118.53px;height:20.25px;line-height:20.25px;font-size:13.50px;color:#444;font-weight:400;transform-origin:center center;transform:translateX(-50%) scaleX(0.9630);">条件付き</div>
<div id="t40" class="t" style="left:1232.60px;top:136.13px;height:20.25px;line-height:20.25px;font-size:13.50px;color:#444;font-weight:400;transform-origin:center center;transform:translateX(-50%) scaleX(1.0370);">書式</div>
<svg class="a" style="left:1251.40px;top:144.80px;" width="6.40" height="4.00" viewBox="0 0 4 2.4"><path d="M0.4 0.3 L2 1.9 L3.6 0.3" fill="none" stroke="#777" stroke-width="0.8"/></svg>
<svg class="a" style="left:1290.80px;top:82.80px;" width="36.00" height="32.80" viewBox="0 0 18 16.4"><g><rect x="0.3" y="0.3" width="15.0" height="11.0" fill="#fff" stroke="#9a9a9a" stroke-width="0.6"/><path d="M3.90 0.3V11.299999999999999" stroke="#9a9a9a" stroke-width="0.5"/><path d="M7.80 0.3V11.299999999999999" stroke="#9a9a9a" stroke-width="0.5"/><path d="M11.70 0.3V11.299999999999999" stroke="#9a9a9a" stroke-width="0.5"/><path d="M0.3 2.90H15.299999999999999" stroke="#9a9a9a" stroke-width="0.5"/><path d="M0.3 5.80H15.299999999999999" stroke="#9a9a9a" stroke-width="0.5"/><path d="M0.3 8.70H15.299999999999999" stroke="#9a9a9a" stroke-width="0.5"/></g><rect x="4" y="3" width="7.8" height="8.3" fill="#a9c7ea"/><path d="M16.8 3.4L17.8 4.4L12.6 10.6L11.4 9.6Z" fill="#666"/><path d="M11.4 9.6L12.6 10.6L10.4 13.8L6.6 13.8Q9.6 12.4 11.4 9.6Z" fill="#2f6fbd"/></svg>
<div id="t41" class="t" style="left:1306.40px;top:118.53px;height:20.25px;line-height:20.25px;font-size:13.50px;color:#444;font-weight:400;transform-origin:center center;transform:translateX(-50%) scaleX(0.7910);">テーブルとして</div>
<div id="t42" class="t" style="left:1299.60px;top:136.13px;height:20.25px;line-height:20.25px;font-size:13.50px;color:#444;font-weight:400;transform-origin:center center;transform:translateX(-50%) scaleX(0.9778);">書式設定</div>
<svg class="a" style="left:1333.20px;top:144.80px;" width="6.40" height="4.00" viewBox="0 0 4 2.4"><path d="M0.4 0.3 L2 1.9 L3.6 0.3" fill="none" stroke="#777" stroke-width="0.8"/></svg>
<svg class="a" style="left:1359.20px;top:82.80px;" width="36.00" height="32.80" viewBox="0 0 18 16.4"><rect x="0.3" y="0.3" width="15" height="11.4" fill="#fff" stroke="#9a9a9a" stroke-width="0.6"/><path d="M0.3 2.2H15.3M2.6 0.3V11.7" stroke="#b5b5b5" stroke-width="0.5"/><rect x="3" y="2.6" width="9.6" height="6.6" fill="#a9c7ea"/><path d="M16.8 3.4L17.8 4.4L12.6 10.6L11.4 9.6Z" fill="#666"/><path d="M11.4 9.6L12.6 10.6L10.4 13.8L6.6 13.8Q9.6 12.4 11.4 9.6Z" fill="#2f6fbd"/></svg>
<div id="t43" class="t" style="left:1376.40px;top:118.53px;height:20.25px;line-height:20.25px;font-size:13.50px;color:#444;font-weight:400;transform-origin:center center;transform:translateX(-50%) scaleX(0.8049);">セルの</div>
<div id="t44" class="t" style="left:1369.40px;top:136.13px;height:20.25px;line-height:20.25px;font-size:13.50px;color:#444;font-weight:400;transform-origin:center center;transform:translateX(-50%) scaleX(0.7630);">スタイル</div>
<svg class="a" style="left:1396.40px;top:144.80px;" width="6.40" height="4.00" viewBox="0 0 4 2.4"><path d="M0.4 0.3 L2 1.9 L3.6 0.3" fill="none" stroke="#777" stroke-width="0.8"/></svg>
<svg class="a" style="left:1432.40px;top:82.60px;" width="32.80" height="32.40" viewBox="0 0 16.4 16.2"><g transform="translate(1.6 0)"><rect x="0.3" y="0.3" width="7.800000000000001" height="2.8" fill="#fff" stroke="#9a9a9a" stroke-width="0.6"/><path d="M4.20 0.3V3.1" stroke="#9a9a9a" stroke-width="0.5"/></g><g transform="translate(1.6 10)"><rect x="0.3" y="0.3" width="7.800000000000001" height="5.4" fill="#fff" stroke="#9a9a9a" stroke-width="0.6"/><path d="M4.20 0.3V5.7" stroke="#9a9a9a" stroke-width="0.5"/><path d="M0.3 3.00H8.1" stroke="#9a9a9a" stroke-width="0.5"/></g><rect x="8" y="5" width="8" height="3.4" fill="#a9c7ea" stroke="#7f9fc6" stroke-width="0.5"/><path d="M12 5V8.4" stroke="#7f9fc6" stroke-width="0.5"/><path d="M6.6 6.7H0.6M2.8 4.6L0.6 6.7L2.8 8.8" stroke="#2f6fbd" stroke-width="1" fill="none"/></svg>
<div id="t45" class="t" style="left:1448.60px;top:118.53px;height:20.25px;line-height:20.25px;font-size:13.50px;color:#444;font-weight:400;transform-origin:center center;transform:translateX(-50%) scaleX(0.9333);">挿入</div>
<svg class="a" style="left:1446.80px;top:144.80px;" width="6.40" height="4.00" viewBox="0 0 4 2.4"><path d="M0.4 0.3 L2 1.9 L3.6 0.3" fill="none" stroke="#777" stroke-width="0.8"/></svg>
<svg class="a" style="left:1481.60px;top:82.60px;" width="32.80" height="32.40" viewBox="0 0 16.4 16.2"><g transform="translate(0.6 0)"><rect x="0.3" y="0.3" width="7.800000000000001" height="2.8" fill="#fff" stroke="#9a9a9a" stroke-width="0.6"/><path d="M4.20 0.3V3.1" stroke="#9a9a9a" stroke-width="0.5"/></g><g transform="translate(0.6 10)"><rect x="0.3" y="0.3" width="7.800000000000001" height="5.4" fill="#fff" stroke="#9a9a9a" stroke-width="0.6"/><path d="M4.20 0.3V5.7" stroke="#9a9a9a" stroke-width="0.5"/><path d="M0.3 3.00H8.1" stroke="#9a9a9a" stroke-width="0.5"/></g><rect x="3.4" y="5" width="5" height="3.4" fill="#a9c7ea" stroke="#7f9fc6" stroke-width="0.5"/><path d="M9.8 3.6L15.6 9.6M15.6 3.6L9.8 9.6" stroke="#e0643c" stroke-width="1.1"/></svg>
<div id="t46" class="t" style="left:1497.20px;top:118.53px;height:20.25px;line-height:20.25px;font-size:13.50px;color:#444;font-weight:400;transform-origin:center center;transform:translateX(-50%) scaleX(0.9778);">削除</div>
<svg class="a" style="left:1494.80px;top:144.80px;" width="6.40" height="4.00" viewBox="0 0 4 2.4"><path d="M0.4 0.3 L2 1.9 L3.6 0.3" fill="none" stroke="#777" stroke-width="0.8"/></svg>
<svg class="a" style="left:1527.40px;top:80.80px;" width="32.00" height="34.80" viewBox="0 0 16 17.4"><path d="M1.6 1.6H14.4M1.6 0.4V2.8M14.4 0.4V2.8M3.2 0.6L1.6 1.6L3.2 2.6M12.8 0.6L14.4 1.6L12.8 2.6" stroke="#2f6fbd" stroke-width="0.6" fill="none"/><g transform="translate(0 4)"><rect x="0.3" y="0.3" width="15.4" height="12.0" fill="#fff" stroke="#9a9a9a" stroke-width="0.6"/><path d="M5.33 0.3V12.299999999999999" stroke="#9a9a9a" stroke-width="0.5"/><path d="M10.67 0.3V12.299999999999999" stroke="#9a9a9a" stroke-width="0.5"/><path d="M0.3 4.20H15.7" stroke="#9a9a9a" stroke-width="0.5"/><path d="M0.3 8.40H15.7" stroke="#9a9a9a" stroke-width="0.5"/></g><rect x="5.4" y="7" width="5.2" height="6.8" fill="#2f6fbd"/></svg>
<div id="t47" class="t" style="left:1544.20px;top:118.73px;height:20.25px;line-height:20.25px;font-size:13.50px;color:#444;font-weight:400;transform-origin:center center;transform:translateX(-50%) scaleX(0.9630);">書式</div>
<svg class="a" style="left:1542.80px;top:144.40px;" width="6.40" height="4.00" viewBox="0 0 4 2.4"><path d="M0.4 0.3 L2 1.9 L3.6 0.3" fill="none" stroke="#777" stroke-width="0.8"/></svg>
<div id="t48" class="t" style="left:1590.40px;top:72.94px;height:31.80px;line-height:31.80px;font-size:21.20px;color:#3c3c3c;font-weight:400;transform-origin:left center;transform:scaleX(1.0679);">Σ</div>
<div id="t49" class="t" style="left:1612.00px;top:79.33px;height:20.25px;line-height:20.25px;font-size:13.50px;color:#444;font-weight:400;transform-origin:left center;transform:scaleX(0.8700);">オート SUM</div>
<svg class="a" style="left:1689.40px;top:88.00px;" width="6.40" height="4.00" viewBox="0 0 4 2.4"><path d="M0.4 0.3 L2 1.9 L3.6 0.3" fill="none" stroke="#777" stroke-width="0.8"/></svg>
<svg class="a" style="left:1590.60px;top:108.00px;" width="15.60" height="15.60" viewBox="0 0 7.8 7.8"><rect x="0.3" y="0.3" width="7.2" height="7.2" fill="#fff" stroke="#777" stroke-width="0.6"/><path d="M3.9 1.6V5.6M2.2 4L3.9 5.8L5.6 4" stroke="#2f6fbd" stroke-width="0.9" fill="none"/></svg>
<div id="t50" class="t" style="left:1612.00px;top:106.33px;height:20.25px;line-height:20.25px;font-size:13.50px;color:#444;font-weight:400;transform-origin:left center;transform:scaleX(0.6462);">フィル</div>
<svg class="a" style="left:1644.80px;top:114.80px;" width="6.40" height="4.00" viewBox="0 0 4 2.4"><path d="M0.4 0.3 L2 1.9 L3.6 0.3" fill="none" stroke="#777" stroke-width="0.8"/></svg>
<svg class="a" style="left:1589.60px;top:132.40px;" width="17.20" height="16.00" viewBox="0 0 8.6 8"><path d="M4.6 0.4L8.2 3L4.2 7.6L0.4 5Z" fill="#ee8f9a"/><path d="M2.6 2.6L6.2 5.2" stroke="#fff" stroke-width="0.5"/></svg>
<div id="t51" class="t" style="left:1612.00px;top:131.13px;height:20.25px;line-height:20.25px;font-size:13.50px;color:#444;font-weight:400;transform-origin:left center;transform:scaleX(0.6765);">クリア</div>
<svg class="a" style="left:1644.80px;top:139.60px;" width="6.40" height="4.00" viewBox="0 0 4 2.4"><path d="M0.4 0.3 L2 1.9 L3.6 0.3" fill="none" stroke="#777" stroke-width="0.8"/></svg>
<svg class="a" style="left:1720.40px;top:81.20px;" width="34.00" height="30.80" viewBox="0 0 17 15.4"><text x="-0.4" y="6.6" font-size="8.8" fill="#2f6fbd" font-family="Liberation Sans,sans-serif">A</text><text x="0" y="14.8" font-size="8.8" fill="#8a4fae" font-family="Liberation Sans,sans-serif">Z</text><path d="M7.2 3.6H16.4L13 7.6V12.4L10.6 10.8V7.6Z" fill="#6a6a6a"/></svg>
<div id="t52" class="t" style="left:1736.00px;top:118.13px;height:20.25px;line-height:20.25px;font-size:13.50px;color:#444;font-weight:400;transform-origin:center center;transform:translateX(-50%) scaleX(0.8504);">並べ替えと</div>
<div id="t53" class="t" style="left:1728.80px;top:135.93px;height:20.25px;line-height:20.25px;font-size:13.50px;color:#444;font-weight:400;transform-origin:center center;transform:translateX(-50%) scaleX(0.7169);">フィルター</div>
<svg class="a" style="left:1759.80px;top:144.40px;" width="6.40" height="4.00" viewBox="0 0 4 2.4"><path d="M0.4 0.3 L2 1.9 L3.6 0.3" fill="none" stroke="#777" stroke-width="0.8"/></svg>
<svg class="a" style="left:1779.00px;top:81.20px;" width="30.80" height="31.20" viewBox="0 0 15.4 15.6"><circle cx="9.6" cy="5.6" r="4.6" fill="#fff" stroke="#2f6fbd" stroke-width="1.3"/><path d="M6.2 9L0.8 14.6" stroke="#2f6fbd" stroke-width="1.8"/></svg>
<div id="t54" class="t" style="left:1793.60px;top:118.13px;height:20.25px;line-height:20.25px;font-size:13.50px;color:#444;font-weight:400;transform-origin:center center;transform:translateX(-50%) scaleX(0.8691);">検索と</div>
<div id="t55" class="t" style="left:1787.00px;top:135.93px;height:20.25px;line-height:20.25px;font-size:13.50px;color:#444;font-weight:400;transform-origin:center center;transform:translateX(-50%) scaleX(0.9630);">選択</div>
<svg class="a" style="left:1806.80px;top:144.40px;" width="6.40" height="4.00" viewBox="0 0 4 2.4"><path d="M0.4 0.3 L2 1.9 L3.6 0.3" fill="none" stroke="#777" stroke-width="0.8"/></svg>
<div class="a" style="left:166.00px;top:191.00px;width:117.00px;height:31.00px;background:#fff;"></div>
<div id="t56" class="t" style="left:171.20px;top:196.17px;height:27.00px;line-height:27.00px;font-size:18.00px;color:#444;font-weight:400;transform-origin:left center;transform:scaleX(0.8598);">E11</div>
<svg class="a" style="left:271.30px;top:205.36px;" width="5.40" height="3.24" viewBox="0 0 3 1.8"><path d="M0 0 L3 0 L1.5 1.8 Z" fill="#666"/></svg>
<div class="a" style="left:300.40px;top:201.20px;width:1.60px;height:1.60px;background:#9a9a9a;"></div>
<div class="a" style="left:300.40px;top:206.00px;width:1.60px;height:1.60px;background:#9a9a9a;"></div>
<div class="a" style="left:300.40px;top:210.80px;width:1.60px;height:1.60px;background:#9a9a9a;"></div>
<div class="a" style="left:320.00px;top:191.00px;width:122.60px;height:31.00px;background:#fff;"></div>
<svg class="a" style="left:332.80px;top:200.40px;" width="12.40" height="12.40" viewBox="0 0 6.2 6.2"><path d="M0.4 0.4L5.8 5.8M5.8 0.4L0.4 5.8" stroke="#b0b0b0" stroke-width="0.7"/></svg>
<svg class="a" style="left:373.20px;top:200.80px;" width="14.40" height="11.60" viewBox="0 0 7.2 5.8"><path d="M0.4 3.2L2.6 5.4L6.8 0.4" stroke="#b0b0b0" stroke-width="0.7" fill="none"/></svg>
<div id="t57" class="t" style="left:415.60px;top:191.50px;height:30.00px;line-height:30.00px;font-size:20.00px;color:#4a4a4a;font-weight:400;transform-origin:left center;font-style:italic;font-family:'Liberation Serif',serif;">f</div>
<div id="t58" class="t" style="left:423.20px;top:199.96px;height:20.40px;line-height:20.40px;font-size:13.60px;color:#4a4a4a;font-weight:400;transform-origin:left center;font-style:italic;font-family:'Liberation Serif',serif;">x</div>
<div class="a" style="left:447.60px;top:191.00px;width:1434.00px;height:31.00px;background:#fff;"></div>
<svg class="a" style="left:1866.40px;top:204.80px;" width="11.20" height="6.80" viewBox="0 0 5.6 3.4"><path d="M0.5 0.5L2.8 2.8L5.1 0.5" fill="none" stroke="#555" stroke-width="0.9"/></svg>
<div class="a" style="left:160.00px;top:234.00px;width:1728.00px;height:29.40px;background:#e6e6e6;"></div>
<div class="a" style="left:160.00px;top:263.40px;width:33.00px;height:793.20px;background:#e6e6e6;"></div>
<div class="a" style="left:510.60px;top:234.00px;width:101.00px;height:29.40px;background:#d2d2d2;border-bottom:2.00px solid #217346;"></div>
<div class="a" style="left:160.00px;top:541.10px;width:33.00px;height:27.68px;background:#d2d2d2;border-right:2.00px solid #217346;"></div>
<div class="a" style="left:271.80px;top:263.40px;width:1.60px;height:793.20px;background:#e1e1e1;"></div>
<div class="a" style="left:271.80px;top:239.00px;width:1.60px;height:24.40px;background:#d0d0d0;"></div>
<div id="t59" class="t" style="left:232.80px;top:234.47px;height:27.00px;line-height:27.00px;font-size:18.00px;color:#4a4a4a;font-weight:400;transform-origin:center center;transform:translateX(-50%) scaleX(1.0000);transform:translateX(-50%) scaleX(0.84);">A</div>
<div class="a" style="left:351.20px;top:263.40px;width:1.60px;height:793.20px;background:#e1e1e1;"></div>
<div class="a" style="left:351.20px;top:239.00px;width:1.60px;height:24.40px;background:#d0d0d0;"></div>
<div id="t60" class="t" style="left:312.30px;top:234.47px;height:27.00px;line-height:27.00px;font-size:18.00px;color:#4a4a4a;font-weight:400;transform-origin:center center;transform:translateX(-50%) scaleX(1.0000);transform:translateX(-50%) scaleX(0.84);">B</div>
<div class="a" style="left:430.60px;top:263.40px;width:1.60px;height:793.20px;background:#e1e1e1;"></div>
<div class="a" style="left:430.60px;top:239.00px;width:1.60px;height:24.40px;background:#d0d0d0;"></div>
<div id="t61" class="t" style="left:391.70px;top:234.47px;height:27.00px;line-height:27.00px;font-size:18.00px;color:#4a4a4a;font-weight:400;transform-origin:center center;transform:translateX(-50%) scaleX(1.0000);transform:translateX(-50%) scaleX(0.84);">C</div>
<div class="a" style="left:509.80px;top:263.40px;width:1.60px;height:793.20px;background:#e1e1e1;"></div>
<div class="a" style="left:509.80px;top:239.00px;width:1.60px;height:24.40px;background:#d0d0d0;"></div>
<div id="t62" class="t" style="left:471.00px;top:234.47px;height:27.00px;line-height:27.00px;font-size:18.00px;color:#4a4a4a;font-weight:400;transform-origin:center center;transform:translateX(-50%) scaleX(1.0000);transform:translateX(-50%) scaleX(0.84);">D</div>
<div class="a" style="left:610.80px;top:263.40px;width:1.60px;height:793.20px;background:#e1e1e1;"></div>
<div class="a" style="left:610.80px;top:239.00px;width:1.60px;height:24.40px;background:#d0d0d0;"></div>
<div id="t63" class="t" style="left:561.10px;top:234.47px;height:27.00px;line-height:27.00px;font-size:18.00px;color:#217346;font-weight:400;transform-origin:center center;transform:translateX(-50%) scaleX(1.0000);transform:translateX(-50%) scaleX(0.84);">E</div>
<div class="a" style="left:690.60px;top:263.40px;width:1.60px;height:793.20px;background:#e1e1e1;"></div>
<div class="a" style="left:690.60px;top:239.00px;width:1.60px;height:24.40px;background:#d0d0d0;"></div>
<div id="t64" class="t" style="left:651.50px;top:234.47px;height:27.00px;line-height:27.00px;font-size:18.00px;color:#4a4a4a;font-weight:400;transform-origin:center center;transform:translateX(-50%) scaleX(1.0000);transform:translateX(-50%) scaleX(0.84);">F</div>
<div class="a" style="left:770.40px;top:263.40px;width:1.60px;height:793.20px;background:#e1e1e1;"></div>
<div class="a" style="left:770.40px;top:239.00px;width:1.60px;height:24.40px;background:#d0d0d0;"></div>
<div id="t65" class="t" style="left:731.30px;top:234.47px;height:27.00px;line-height:27.00px;font-size:18.00px;color:#4a4a4a;font-weight:400;transform-origin:center center;transform:translateX(-50%) scaleX(1.0000);transform:translateX(-50%) scaleX(0.84);">G</div>
<div class="a" style="left:850.00px;top:263.40px;width:1.60px;height:793.20px;background:#e1e1e1;"></div>
<div class="a" style="left:850.00px;top:239.00px;width:1.60px;height:24.40px;background:#d0d0d0;"></div>
<div id="t66" class="t" style="left:811.00px;top:234.47px;height:27.00px;line-height:27.00px;font-size:18.00px;color:#4a4a4a;font-weight:400;transform-origin:center center;transform:translateX(-50%) scaleX(1.0000);transform:translateX(-50%) scaleX(0.84);">H</div>
<div class="a" style="left:929.40px;top:263.40px;width:1.60px;height:793.20px;background:#e1e1e1;"></div>
<div class="a" style="left:929.40px;top:239.00px;width:1.60px;height:24.40px;background:#d0d0d0;"></div>
<div id="t67" class="t" style="left:890.50px;top:234.47px;height:27.00px;line-height:27.00px;font-size:18.00px;color:#4a4a4a;font-weight:400;transform-origin:center center;transform:translateX(-50%) scaleX(1.0000);transform:translateX(-50%) scaleX(0.84);">I</div>
<div class="a" style="left:1008.80px;top:263.40px;width:1.60px;height:793.20px;background:#e1e1e1;"></div>
<div class="a" style="left:1008.80px;top:239.00px;width:1.60px;height:24.40px;background:#d0d0d0;"></div>
<div id="t68" class="t" style="left:969.90px;top:234.47px;height:27.00px;line-height:27.00px;font-size:18.00px;color:#4a4a4a;font-weight:400;transform-origin:center center;transform:translateX(-50%) scaleX(1.0000);transform:translateX(-50%) scaleX(0.84);">J</div>
<div class="a" style="left:1109.00px;top:263.40px;width:1.60px;height:793.20px;background:#e1e1e1;"></div>
<div class="a" style="left:1109.00px;top:239.00px;width:1.60px;height:24.40px;background:#d0d0d0;"></div>
<div id="t69" class="t" style="left:1059.70px;top:234.47px;height:27.00px;line-height:27.00px;font-size:18.00px;color:#4a4a4a;font-weight:400;transform-origin:center center;transform:translateX(-50%) scaleX(1.0000);transform:translateX(-50%) scaleX(0.84);">K</div>
<div class="a" style="left:1209.40px;top:263.40px;width:1.60px;height:793.20px;background:#e1e1e1;"></div>
<div class="a" style="left:1209.40px;top:239.00px;width:1.60px;height:24.40px;background:#d0d0d0;"></div>
<div id="t70" class="t" style="left:1160.00px;top:234.47px;height:27.00px;line-height:27.00px;font-size:18.00px;color:#4a4a4a;font-weight:400;transform-origin:center center;transform:translateX(-50%) scaleX(1.0000);transform:translateX(-50%) scaleX(0.84);">L</div>
<div class="a" style="left:1310.20px;top:263.40px;width:1.60px;height:793.20px;background:#e1e1e1;"></div>
<div class="a" style="left:1310.20px;top:239.00px;width:1.60px;height:24.40px;background:#d0d0d0;"></div>
<div id="t71" class="t" style="left:1260.60px;top:234.47px;height:27.00px;line-height:27.00px;font-size:18.00px;color:#4a4a4a;font-weight:400;transform-origin:center center;transform:translateX(-50%) scaleX(1.0000);transform:translateX(-50%) scaleX(0.84);">M</div>
<div class="a" style="left:1410.40px;top:263.40px;width:1.60px;height:793.20px;background:#e1e1e1;"></div>
<div class="a" style="left:1410.40px;top:239.00px;width:1.60px;height:24.40px;background:#d0d0d0;"></div>
<div id="t72" class="t" style="left:1361.10px;top:234.47px;height:27.00px;line-height:27.00px;font-size:18.00px;color:#4a4a4a;font-weight:400;transform-origin:center center;transform:translateX(-50%) scaleX(1.0000);transform:translateX(-50%) scaleX(0.84);">N</div>
<div class="a" style="left:1510.60px;top:263.40px;width:1.60px;height:793.20px;background:#e1e1e1;"></div>
<div class="a" style="left:1510.60px;top:239.00px;width:1.60px;height:24.40px;background:#d0d0d0;"></div>
<div id="t73" class="t" style="left:1461.30px;top:234.47px;height:27.00px;line-height:27.00px;font-size:18.00px;color:#4a4a4a;font-weight:400;transform-origin:center center;transform:translateX(-50%) scaleX(1.0000);transform:translateX(-50%) scaleX(0.84);">O</div>
<div class="a" style="left:1611.60px;top:263.40px;width:1.60px;height:793.20px;background:#e1e1e1;"></div>
<div class="a" style="left:1611.60px;top:239.00px;width:1.60px;height:24.40px;background:#d0d0d0;"></div>
<div id="t74" class="t" style="left:1561.90px;top:234.47px;height:27.00px;line-height:27.00px;font-size:18.00px;color:#4a4a4a;font-weight:400;transform-origin:center center;transform:translateX(-50%) scaleX(1.0000);transform:translateX(-50%) scaleX(0.84);">P</div>
<div class="a" style="left:1712.20px;top:263.40px;width:1.60px;height:793.20px;background:#e1e1e1;"></div>
<div class="a" style="left:1712.20px;top:239.00px;width:1.60px;height:24.40px;background:#d0d0d0;"></div>
<div id="t75" class="t" style="left:1662.70px;top:234.47px;height:27.00px;line-height:27.00px;font-size:18.00px;color:#4a4a4a;font-weight:400;transform-origin:center center;transform:translateX(-50%) scaleX(1.0000);transform:translateX(-50%) scaleX(0.84);">Q</div>
<div class="a" style="left:1812.20px;top:263.40px;width:1.60px;height:793.20px;background:#e1e1e1;"></div>
<div class="a" style="left:1812.20px;top:239.00px;width:1.60px;height:24.40px;background:#d0d0d0;"></div>
<div id="t76" class="t" style="left:1763.00px;top:234.47px;height:27.00px;line-height:27.00px;font-size:18.00px;color:#4a4a4a;font-weight:400;transform-origin:center center;transform:translateX(-50%) scaleX(1.0000);transform:translateX(-50%) scaleX(0.84);">R</div>
<div class="a" style="left:1891.20px;top:263.40px;width:1.60px;height:793.20px;background:#e1e1e1;"></div>
<div class="a" style="left:1891.20px;top:239.00px;width:1.60px;height:24.40px;background:#d0d0d0;"></div>
<div id="t77" class="t" style="left:1852.50px;top:234.47px;height:27.00px;line-height:27.00px;font-size:18.00px;color:#4a4a4a;font-weight:400;transform-origin:center center;transform:translateX(-50%) scaleX(1.0000);transform:translateX(-50%) scaleX(0.84);">S</div>
<div class="a" style="left:192.20px;top:234.00px;width:1.60px;height:822.60px;background:#c9c9c9;"></div>
<div class="a" style="left:193.00px;top:290.36px;width:1700.00px;height:1.60px;background:#e1e1e1;"></div>
<div class="a" style="left:160.00px;top:290.36px;width:33.00px;height:1.60px;background:#c9c9c9;"></div>
<div class="t" style="left:160.00px;width:33.00px;text-align:center;top:264.40px;height:27.68px;line-height:27.68px;font-size:18.00px;transform:scaleX(0.84);color:#4a4a4a;clip-path:inset(0 0 0.00px 0);">1</div>
<div class="a" style="left:193.00px;top:318.14px;width:1700.00px;height:1.60px;background:#e1e1e1;"></div>
<div class="a" style="left:160.00px;top:318.14px;width:33.00px;height:1.60px;background:#c9c9c9;"></div>
<div class="t" style="left:160.00px;width:33.00px;text-align:center;top:292.16px;height:27.68px;line-height:27.68px;font-size:18.00px;transform:scaleX(0.84);color:#4a4a4a;clip-path:inset(0 0 0.00px 0);">2</div>
<div class="a" style="left:193.00px;top:345.90px;width:1700.00px;height:1.60px;background:#e1e1e1;"></div>
<div class="a" style="left:160.00px;top:345.90px;width:33.00px;height:1.60px;background:#c9c9c9;"></div>
<div class="t" style="left:160.00px;width:33.00px;text-align:center;top:319.94px;height:27.68px;line-height:27.68px;font-size:18.00px;transform:scaleX(0.84);color:#4a4a4a;clip-path:inset(0 0 0.00px 0);">3</div>
<div class="a" style="left:193.00px;top:373.68px;width:1700.00px;height:1.60px;background:#e1e1e1;"></div>
<div class="a" style="left:160.00px;top:373.68px;width:33.00px;height:1.60px;background:#c9c9c9;"></div>
<div class="t" style="left:160.00px;width:33.00px;text-align:center;top:347.70px;height:27.68px;line-height:27.68px;font-size:18.00px;transform:scaleX(0.84);color:#4a4a4a;clip-path:inset(0 0 0.00px 0);">4</div>
<div class="a" style="left:193.00px;top:401.44px;width:1700.00px;height:1.60px;background:#e1e1e1;"></div>
<div class="a" style="left:160.00px;top:401.44px;width:33.00px;height:1.60px;background:#c9c9c9;"></div>
<div class="t" style="left:160.00px;width:33.00px;text-align:center;top:375.48px;height:27.68px;line-height:27.68px;font-size:18.00px;transform:scaleX(0.84);color:#4a4a4a;clip-path:inset(0 0 0.00px 0);">5</div>
<div class="a" style="left:193.00px;top:429.22px;width:1700.00px;height:1.60px;background:#e1e1e1;"></div>
<div class="a" style="left:160.00px;top:429.22px;width:33.00px;height:1.60px;background:#c9c9c9;"></div>
<div class="t" style="left:160.00px;width:33.00px;text-align:center;top:403.24px;height:27.68px;line-height:27.68px;font-size:18.00px;transform:scaleX(0.84);color:#4a4a4a;clip-path:inset(0 0 0.00px 0);">6</div>
<div class="a" style="left:193.00px;top:456.98px;width:1700.00px;height:1.60px;background:#e1e1e1;"></div>
<div class="a" style="left:160.00px;top:456.98px;width:33.00px;height:1.60px;background:#c9c9c9;"></div>
<div class="t" style="left:160.00px;width:33.00px;text-align:center;top:431.02px;height:27.68px;line-height:27.68px;font-size:18.00px;transform:scaleX(0.84);color:#4a4a4a;clip-path:inset(0 0 0.00px 0);">7</div>
<div class="a" style="left:193.00px;top:484.76px;width:1700.00px;height:1.60px;background:#e1e1e1;"></div>
<div class="a" style="left:160.00px;top:484.76px;width:33.00px;height:1.60px;background:#c9c9c9;"></div>
<div class="t" style="left:160.00px;width:33.00px;text-align:center;top:458.78px;height:27.68px;line-height:27.68px;font-size:18.00px;transform:scaleX(0.84);color:#4a4a4a;clip-path:inset(0 0 0.00px 0);">8</div>
<div class="a" style="left:193.00px;top:512.52px;width:1700.00px;height:1.60px;background:#e1e1e1;"></div>
<div class="a" style="left:160.00px;top:512.52px;width:33.00px;height:1.60px;background:#c9c9c9;"></div>
<div class="t" style="left:160.00px;width:33.00px;text-align:center;top:486.56px;height:27.68px;line-height:27.68px;font-size:18.00px;transform:scaleX(0.84);color:#4a4a4a;clip-path:inset(0 0 0.00px 0);">9</div>
<div class="a" style="left:193.00px;top:540.30px;width:1700.00px;height:1.60px;background:#e1e1e1;"></div>
<div class="a" style="left:160.00px;top:540.30px;width:33.00px;height:1.60px;background:#c9c9c9;"></div>
<div class="t" style="left:160.00px;width:33.00px;text-align:center;top:514.32px;height:27.68px;line-height:27.68px;font-size:18.00px;transform:scaleX(0.84);color:#4a4a4a;clip-path:inset(0 0 0.00px 0);">10</div>
<div class="a" style="left:193.00px;top:568.06px;width:1700.00px;height:1.60px;background:#e1e1e1;"></div>
<div class="a" style="left:160.00px;top:568.06px;width:33.00px;height:1.60px;background:#c9c9c9;"></div>
<div class="t" style="left:160.00px;width:33.00px;text-align:center;top:542.10px;height:27.68px;line-height:27.68px;font-size:18.00px;transform:scaleX(0.84);color:#217346;clip-path:inset(0 0 0.00px 0);">11</div>
<div class="a" style="left:193.00px;top:595.84px;width:1700.00px;height:1.60px;background:#e1e1e1;"></div>
<div class="a" style="left:160.00px;top:595.84px;width:33.00px;height:1.60px;background:#c9c9c9;"></div>
<div class="t" style="left:160.00px;width:33.00px;text-align:center;top:569.86px;height:27.68px;line-height:27.68px;font-size:18.00px;transform:scaleX(0.84);color:#4a4a4a;clip-path:inset(0 0 0.00px 0);">12</div>
<div class="a" style="left:193.00px;top:623.62px;width:1700.00px;height:1.60px;background:#e1e1e1;"></div>
<div class="a" style="left:160.00px;top:623.62px;width:33.00px;height:1.60px;background:#c9c9c9;"></div>
<div class="t" style="left:160.00px;width:33.00px;text-align:center;top:597.64px;height:27.68px;line-height:27.68px;font-size:18.00px;transform:scaleX(0.84);color:#4a4a4a;clip-path:inset(0 0 0.00px 0);">13</div>
<div class="a" style="left:193.00px;top:651.22px;width:1700.00px;height:1.60px;background:#e1e1e1;"></div>
<div class="a" style="left:160.00px;top:651.22px;width:33.00px;height:1.60px;background:#c9c9c9;"></div>
<div class="t" style="left:160.00px;width:33.00px;text-align:center;top:625.40px;height:27.68px;line-height:27.68px;font-size:18.00px;transform:scaleX(0.84);color:#4a4a4a;clip-path:inset(0 0 0.00px 0);">14</div>
<div class="a" style="left:193.00px;top:678.82px;width:1700.00px;height:1.60px;background:#e1e1e1;"></div>
<div class="a" style="left:160.00px;top:678.82px;width:33.00px;height:1.60px;background:#c9c9c9;"></div>
<div class="t" style="left:160.00px;width:33.00px;text-align:center;top:653.00px;height:27.68px;line-height:27.68px;font-size:18.00px;transform:scaleX(0.84);color:#4a4a4a;clip-path:inset(0 0 0.00px 0);">15</div>
<div class="a" style="left:193.00px;top:706.42px;width:1700.00px;height:1.60px;background:#e1e1e1;"></div>
<div class="a" style="left:160.00px;top:706.42px;width:33.00px;height:1.60px;background:#c9c9c9;"></div>
<div class="t" style="left:160.00px;width:33.00px;text-align:center;top:680.62px;height:27.68px;line-height:27.68px;font-size:18.00px;transform:scaleX(0.84);color:#4a4a4a;clip-path:inset(0 0 0.00px 0);">16</div>
<div class="a" style="left:193.00px;top:734.00px;width:1700.00px;height:1.60px;background:#e1e1e1;"></div>
<div class="a" style="left:160.00px;top:734.00px;width:33.00px;height:1.60px;background:#c9c9c9;"></div>
<div class="t" style="left:160.00px;width:33.00px;text-align:center;top:708.22px;height:27.68px;line-height:27.68px;font-size:18.00px;transform:scaleX(0.84);color:#4a4a4a;clip-path:inset(0 0 0.00px 0);">17</div>
<div class="a" style="left:193.00px;top:761.62px;width:1700.00px;height:1.60px;background:#e1e1e1;"></div>
<div class="a" style="left:160.00px;top:761.62px;width:33.00px;height:1.60px;background:#c9c9c9;"></div>
<div class="t" style="left:160.00px;width:33.00px;text-align:center;top:735.80px;height:27.68px;line-height:27.68px;font-size:18.00px;transform:scaleX(0.84);color:#4a4a4a;clip-path:inset(0 0 0.00px 0);">18</div>
<div class="a" style="left:193.00px;top:789.22px;width:1700.00px;height:1.60px;background:#e1e1e1;"></div>
<div class="a" style="left:160.00px;top:789.22px;width:33.00px;height:1.60px;background:#c9c9c9;"></div>
<div class="t" style="left:160.00px;width:33.00px;text-align:center;top:763.40px;height:27.68px;line-height:27.68px;font-size:18.00px;transform:scaleX(0.84);color:#4a4a4a;clip-path:inset(0 0 0.00px 0);">19</div>
<div class="a" style="left:193.00px;top:816.82px;width:1700.00px;height:1.60px;background:#e1e1e1;"></div>
<div class="a" style="left:160.00px;top:816.82px;width:33.00px;height:1.60px;background:#c9c9c9;"></div>
<div class="t" style="left:160.00px;width:33.00px;text-align:center;top:791.00px;height:27.68px;line-height:27.68px;font-size:18.00px;transform:scaleX(0.84);color:#4a4a4a;clip-path:inset(0 0 0.00px 0);">20</div>
<div class="a" style="left:193.00px;top:844.42px;width:1700.00px;height:1.60px;background:#e1e1e1;"></div>
<div class="a" style="left:160.00px;top:844.42px;width:33.00px;height:1.60px;background:#c9c9c9;"></div>
<div class="t" style="left:160.00px;width:33.00px;text-align:center;top:818.62px;height:27.68px;line-height:27.68px;font-size:18.00px;transform:scaleX(0.84);color:#4a4a4a;clip-path:inset(0 0 0.00px 0);">21</div>
<div class="a" style="left:193.00px;top:872.00px;width:1700.00px;height:1.60px;background:#e1e1e1;"></div>
<div class="a" style="left:160.00px;top:872.00px;width:33.00px;height:1.60px;background:#c9c9c9;"></div>
<div class="t" style="left:160.00px;width:33.00px;text-align:center;top:846.22px;height:27.68px;line-height:27.68px;font-size:18.00px;transform:scaleX(0.84);color:#4a4a4a;clip-path:inset(0 0 0.00px 0);">22</div>
<div class="a" style="left:193.00px;top:899.62px;width:1700.00px;height:1.60px;background:#e1e1e1;"></div>
<div class="a" style="left:160.00px;top:899.62px;width:33.00px;height:1.60px;background:#c9c9c9;"></div>
<div class="t" style="left:160.00px;width:33.00px;text-align:center;top:873.80px;height:27.68px;line-height:27.68px;font-size:18.00px;transform:scaleX(0.84);color:#4a4a4a;clip-path:inset(0 0 0.00px 0);">23</div>
<div class="a" style="left:193.00px;top:927.22px;width:1700.00px;height:1.60px;background:#e1e1e1;"></div>
<div class="a" style="left:160.00px;top:927.22px;width:33.00px;height:1.60px;background:#c9c9c9;"></div>
<div class="t" style="left:160.00px;width:33.00px;text-align:center;top:901.40px;height:27.68px;line-height:27.68px;font-size:18.00px;transform:scaleX(0.84);color:#4a4a4a;clip-path:inset(0 0 0.00px 0);">24</div>
<div class="a" style="left:193.00px;top:954.82px;width:1700.00px;height:1.60px;background:#e1e1e1;"></div>
<div class="a" style="left:160.00px;top:954.82px;width:33.00px;height:1.60px;background:#c9c9c9;"></div>
<div class="t" style="left:160.00px;width:33.00px;text-align:center;top:929.00px;height:27.68px;line-height:27.68px;font-size:18.00px;transform:scaleX(0.84);color:#4a4a4a;clip-path:inset(0 0 0.00px 0);">25</div>
<div class="a" style="left:193.00px;top:982.42px;width:1700.00px;height:1.60px;background:#e1e1e1;"></div>
<div class="a" style="left:160.00px;top:982.42px;width:33.00px;height:1.60px;background:#c9c9c9;"></div>
<div class="t" style="left:160.00px;width:33.00px;text-align:center;top:956.62px;height:27.68px;line-height:27.68px;font-size:18.00px;transform:scaleX(0.84);color:#4a4a4a;clip-path:inset(0 0 0.00px 0);">26</div>
<div class="a" style="left:193.00px;top:1010.00px;width:1700.00px;height:1.60px;background:#e1e1e1;"></div>
<div class="a" style="left:160.00px;top:1010.00px;width:33.00px;height:1.60px;background:#c9c9c9;"></div>
<div class="t" style="left:160.00px;width:33.00px;text-align:center;top:984.22px;height:27.68px;line-height:27.68px;font-size:18.00px;transform:scaleX(0.84);color:#4a4a4a;clip-path:inset(0 0 0.00px 0);">27</div>
<div class="a" style="left:193.00px;top:1037.60px;width:1700.00px;height:1.60px;background:#e1e1e1;"></div>
<div class="a" style="left:160.00px;top:1037.60px;width:33.00px;height:1.60px;background:#c9c9c9;"></div>
<div class="t" style="left:160.00px;width:33.00px;text-align:center;top:1011.80px;height:27.68px;line-height:27.68px;font-size:18.00px;transform:scaleX(0.84);color:#4a4a4a;clip-path:inset(0 0 0.00px 0);">28</div>
<div class="t" style="left:160.00px;width:33.00px;text-align:center;top:1039.40px;height:27.68px;line-height:27.68px;font-size:18.00px;transform:scaleX(0.84);color:#4a4a4a;clip-path:inset(0 0 10.50px 0);">29</div>
<div class="a" style="left:160.00px;top:262.60px;width:1728.00px;height:1.60px;background:#c9c9c9;"></div>
<svg class="a" style="left:169.20px;top:241.20px;" width="20.80" height="19.20" viewBox="0 0 10.4 9.6"><path d="M10.4 0V9.6H0Z" fill="#b7b7b7"/></svg>
<div class="a" style="left:193.00px;top:291.16px;width:418.60px;height:27.78px;background:#dbe3f3;"></div>
<div id="t78" class="t" style="left:196.80px;top:291.38px;height:24.75px;line-height:24.75px;font-size:16.50px;color:#444;font-weight:300;transform-origin:left center;">商品番号</div>
<div id="t79" class="t" style="left:276.40px;top:291.38px;height:24.75px;line-height:24.75px;font-size:16.50px;color:#444;font-weight:300;transform-origin:left center;">商品名</div>
<div id="t80" class="t" style="left:355.80px;top:291.38px;height:24.75px;line-height:24.75px;font-size:16.50px;color:#444;font-weight:300;transform-origin:left center;">単価</div>
<div id="t81" class="t" style="left:435.20px;top:291.38px;height:24.75px;line-height:24.75px;font-size:16.50px;color:#444;font-weight:300;transform-origin:left center;">個数</div>
<div id="t82" class="t" style="left:514.40px;top:291.38px;height:24.75px;line-height:24.75px;font-size:16.50px;color:#444;font-weight:300;transform-origin:left center;">合計</div>
<div id="t83" class="t" style="right:1779.20px;top:319.15px;height:24.75px;line-height:24.75px;font-size:16.50px;color:#444;font-weight:300;transform-origin:right center;">1</div>
<div id="t84" class="t" style="left:276.40px;top:319.15px;height:24.75px;line-height:24.75px;font-size:16.50px;color:#444;font-weight:300;transform-origin:left center;">商品A</div>
<div id="t85" class="t" style="right:1620.40px;top:319.15px;height:24.75px;line-height:24.75px;font-size:16.50px;color:#444;font-weight:300;transform-origin:right center;">1640</div>
<div id="t86" class="t" style="right:1541.20px;top:319.15px;height:24.75px;line-height:24.75px;font-size:16.50px;color:#444;font-weight:300;transform-origin:right center;">3</div>
<div id="t87" class="t" style="right:1440.20px;top:319.15px;height:24.75px;line-height:24.75px;font-size:16.50px;color:#444;font-weight:300;transform-origin:right center;">4920</div>
<div id="t88" class="t" style="right:1779.20px;top:346.92px;height:24.75px;line-height:24.75px;font-size:16.50px;color:#444;font-weight:300;transform-origin:right center;">2</div>
<div id="t89" class="t" style="left:276.40px;top:346.92px;height:24.75px;line-height:24.75px;font-size:16.50px;color:#444;font-weight:300;transform-origin:left center;">商品B</div>
<div id="t90" class="t" style="right:1620.40px;top:346.92px;height:24.75px;line-height:24.75px;font-size:16.50px;color:#444;font-weight:300;transform-origin:right center;">2344</div>
<div id="t91" class="t" style="right:1541.20px;top:346.92px;height:24.75px;line-height:24.75px;font-size:16.50px;color:#444;font-weight:300;transform-origin:right center;">5</div>
<div id="t92" class="t" style="right:1440.20px;top:346.92px;height:24.75px;line-height:24.75px;font-size:16.50px;color:#444;font-weight:300;transform-origin:right center;">11720</div>
<div id="t93" class="t" style="right:1779.20px;top:374.69px;height:24.75px;line-height:24.75px;font-size:16.50px;color:#444;font-weight:300;transform-origin:right center;">3</div>
<div id="t94" class="t" style="left:276.40px;top:374.69px;height:24.75px;line-height:24.75px;font-size:16.50px;color:#444;font-weight:300;transform-origin:left center;">商品C</div>
<div id="t95" class="t" style="right:1620.40px;top:374.69px;height:24.75px;line-height:24.75px;font-size:16.50px;color:#444;font-weight:300;transform-origin:right center;">3575</div>
<div id="t96" class="t" style="right:1541.20px;top:374.69px;height:24.75px;line-height:24.75px;font-size:16.50px;color:#444;font-weight:300;transform-origin:right center;">7</div>
<div id="t97" class="t" style="right:1440.20px;top:374.69px;height:24.75px;line-height:24.75px;font-size:16.50px;color:#444;font-weight:300;transform-origin:right center;">25025</div>
<div id="t98" class="t" style="left:435.20px;top:402.46px;height:24.75px;line-height:24.75px;font-size:16.50px;color:#444;font-weight:300;transform-origin:left center;">総合計</div>
<div id="t99" class="t" style="right:1440.20px;top:402.46px;height:24.75px;line-height:24.75px;font-size:16.50px;color:#444;font-weight:300;transform-origin:right center;">41665</div>
<div class="a" style="left:192.20px;top:345.90px;width:420.20px;height:1.60px;background:#adadad;"></div>
<div class="a" style="left:192.20px;top:373.68px;width:420.20px;height:1.60px;background:#adadad;"></div>
<div class="a" style="left:192.20px;top:290.36px;width:420.20px;height:1.60px;background:#858585;"></div>
<div class="a" style="left:192.20px;top:318.14px;width:420.20px;height:1.60px;background:#858585;"></div>
<div class="a" style="left:192.20px;top:401.44px;width:420.20px;height:1.60px;background:#858585;"></div>
<div class="a" style="left:430.60px;top:429.22px;width:181.80px;height:1.60px;background:#858585;"></div>
<div class="a" style="left:271.80px;top:318.14px;width:1.60px;height:84.90px;background:#adadad;"></div>
<div class="a" style="left:351.20px;top:318.14px;width:1.60px;height:84.90px;background:#adadad;"></div>
<div class="a" style="left:509.80px;top:318.14px;width:1.60px;height:84.90px;background:#adadad;"></div>
<div class="a" style="left:271.80px;top:290.36px;width:1.60px;height:29.38px;background:#858585;"></div>
<div class="a" style="left:351.20px;top:290.36px;width:1.60px;height:29.38px;background:#858585;"></div>
<div class="a" style="left:430.60px;top:290.36px;width:1.60px;height:29.38px;background:#858585;"></div>
<div class="a" style="left:509.80px;top:290.36px;width:1.60px;height:29.38px;background:#858585;"></div>
<div class="a" style="left:192.20px;top:290.36px;width:1.60px;height:112.68px;background:#858585;"></div>
<div class="a" style="left:430.60px;top:290.36px;width:1.60px;height:140.46px;background:#858585;"></div>
<div class="a" style="left:509.80px;top:401.44px;width:1.60px;height:29.36px;background:#adadad;"></div>
<div class="a" style="left:610.80px;top:290.36px;width:1.60px;height:140.46px;background:#858585;"></div>
<div class="a" style="left:691.40px;top:291.16px;width:238.80px;height:27.78px;background:#fbe4d5;"></div>
<div id="t100" class="t" style="left:695.20px;top:291.38px;height:24.75px;line-height:24.75px;font-size:16.50px;color:#444;font-weight:300;transform-origin:left center;">商品番号</div>
<div id="t101" class="t" style="left:775.00px;top:291.38px;height:24.75px;line-height:24.75px;font-size:16.50px;color:#444;font-weight:300;transform-origin:left center;">商品名</div>
<div id="t102" class="t" style="left:854.60px;top:291.38px;height:24.75px;line-height:24.75px;font-size:16.50px;color:#444;font-weight:300;transform-origin:left center;">単価</div>
<div id="t103" class="t" style="right:1280.60px;top:319.15px;height:24.75px;line-height:24.75px;font-size:16.50px;color:#444;font-weight:300;transform-origin:right center;">1</div>
<div id="t104" class="t" style="left:775.00px;top:319.15px;height:24.75px;line-height:24.75px;font-size:16.50px;color:#444;font-weight:300;transform-origin:left center;">商品A</div>
<div id="t105" class="t" style="right:1121.60px;top:319.15px;height:24.75px;line-height:24.75px;font-size:16.50px;color:#444;font-weight:300;transform-origin:right center;">1640</div>
<div id="t106" class="t" style="right:1280.60px;top:346.92px;height:24.75px;line-height:24.75px;font-size:16.50px;color:#444;font-weight:300;transform-origin:right center;">2</div>
<div id="t107" class="t" style="left:775.00px;top:346.92px;height:24.75px;line-height:24.75px;font-size:16.50px;color:#444;font-weight:300;transform-origin:left center;">商品B</div>
<div id="t108" class="t" style="right:1121.60px;top:346.92px;height:24.75px;line-height:24.75px;font-size:16.50px;color:#444;font-weight:300;transform-origin:right center;">2344</div>
<div id="t109" class="t" style="right:1280.60px;top:374.69px;height:24.75px;line-height:24.75px;font-size:16.50px;color:#444;font-weight:300;transform-origin:right center;">3</div>
<div id="t110" class="t" style="left:775.00px;top:374.69px;height:24.75px;line-height:24.75px;font-size:16.50px;color:#444;font-weight:300;transform-origin:left center;">商品C</div>
<div id="t111" class="t" style="right:1121.60px;top:374.69px;height:24.75px;line-height:24.75px;font-size:16.50px;color:#444;font-weight:300;transform-origin:right center;">3575</div>
<div class="a" style="left:690.60px;top:345.90px;width:240.40px;height:1.60px;background:#adadad;"></div>
<div class="a" style="left:690.60px;top:373.68px;width:240.40px;height:1.60px;background:#adadad;"></div>
<div class="a" style="left:690.60px;top:290.36px;width:240.40px;height:1.60px;background:#858585;"></div>
<div class="a" style="left:690.60px;top:318.14px;width:240.40px;height:1.60px;background:#858585;"></div>
<div class="a" style="left:690.60px;top:401.44px;width:240.40px;height:1.60px;background:#858585;"></div>
<div class="a" style="left:770.40px;top:290.36px;width:1.60px;height:112.68px;background:#adadad;"></div>
<div class="a" style="left:850.00px;top:290.36px;width:1.60px;height:112.68px;background:#adadad;"></div>
<div class="a" style="left:690.60px;top:290.36px;width:1.60px;height:112.68px;background:#858585;"></div>
<div class="a" style="left:929.40px;top:290.36px;width:1.60px;height:112.68px;background:#858585;"></div>
<div class="a" style="left:352.00px;top:457.78px;width:158.60px;height:27.76px;background:#e2efda;"></div>
<div id="t112" class="t" style="left:431.30px;top:458.00px;height:24.75px;line-height:24.75px;font-size:16.50px;color:#444;font-weight:300;transform-origin:center center;transform:translateX(-50%) scaleX(1.0000);">平均売上</div>
<div id="t113" class="t" style="right:1440.20px;top:458.00px;height:24.75px;line-height:24.75px;font-size:16.50px;color:#444;font-weight:300;transform-origin:right center;">13888.3333</div>
<div class="a" style="left:351.20px;top:456.98px;width:261.20px;height:1.60px;background:#858585;"></div>
<div class="a" style="left:351.20px;top:484.76px;width:261.20px;height:1.60px;background:#858585;"></div>
<div class="a" style="left:351.20px;top:456.98px;width:1.60px;height:29.36px;background:#858585;"></div>
<div class="a" style="left:509.80px;top:456.98px;width:1.60px;height:29.36px;background:#858585;"></div>
<div class="a" style="left:610.80px;top:456.98px;width:1.60px;height:29.36px;background:#858585;"></div>
<div class="a" style="left:352.00px;top:513.32px;width:158.60px;height:27.76px;background:#ffff00;"></div>
<div id="t114" class="t" style="left:356.40px;top:513.54px;height:24.75px;line-height:24.75px;font-size:16.50px;color:#5a5a2a;font-weight:300;transform-origin:left center;transform:scaleX(0.9152);">平均売上（四捨五入）</div>
<div id="t115" class="t" style="right:1440.20px;top:513.54px;height:24.75px;line-height:24.75px;font-size:16.50px;color:#444;font-weight:300;transform-origin:right center;">13888</div>
<div class="a" style="left:509.80px;top:512.52px;width:102.60px;height:1.60px;background:#adadad;"></div>
<div class="a" style="left:610.80px;top:512.52px;width:1.60px;height:29.36px;background:#adadad;"></div>
<div class="a" style="left:351.40px;top:512.72px;width:159.80px;height:1.20px;background:#d8d800;"></div>
<div class="a" style="left:351.40px;top:540.50px;width:159.80px;height:1.20px;background:#d8d800;"></div>
<div class="a" style="left:509.20px;top:539.70px;width:103.80px;height:30.48px;border:2.20px solid #3f8062;"></div>
<div class="a" style="left:608.60px;top:565.86px;width:6.40px;height:6.40px;background:#217346;box-shadow:0 0 0 1.40px #fff;"></div>
<div class="a" style="left:498.00px;top:494.00px;width:133.60px;height:65.00px;border:8.80px solid #f20d10;"></div>
<svg class="a" style="left:749.00px;top:613.20px;" width="30.00" height="30.00" viewBox="0 0 15 15"><circle cx="7.5" cy="7.5" r="7.3" fill="#f6857d"/><path d="M6 3.6H9V6H11.4V9H9V11.4H6V9H3.6V6H6Z" fill="#fff" stroke="#3a2a2a" stroke-width="0.7"/></svg>
<div class="a" style="left:1009.60px;top:291.16px;width:803.40px;height:222.16px;background:#fff;"></div>
<div class="a" style="left:1109.80px;top:291.16px;width:703.20px;height:55.54px;background:#fff2cc;"></div>
<div id="t116" class="t" style="left:1160.00px;top:305.26px;height:24.75px;line-height:24.75px;font-size:16.50px;color:#222;font-weight:700;transform-origin:center center;transform:translateX(-50%) scaleX(0.9859);">百の位</div>
<div id="t117" class="t" style="left:1260.60px;top:305.26px;height:24.75px;line-height:24.75px;font-size:16.50px;color:#222;font-weight:700;transform-origin:center center;transform:translateX(-50%) scaleX(0.9859);">十の位</div>
<div id="t118" class="t" style="left:1361.10px;top:305.26px;height:24.75px;line-height:24.75px;font-size:16.50px;color:#222;font-weight:700;transform-origin:center center;transform:translateX(-50%) scaleX(0.9859);">一の位</div>
<div id="t119" class="t" style="left:1461.30px;top:306.71px;height:22.50px;line-height:22.50px;font-size:15.00px;color:#222;font-weight:700;transform-origin:center center;transform:translateX(-50%) scaleX(1.0132);">小数点第一位</div>
<div id="t120" class="t" style="left:1561.90px;top:306.71px;height:22.50px;line-height:22.50px;font-size:15.00px;color:#222;font-weight:700;transform-origin:center center;transform:translateX(-50%) scaleX(1.0132);">小数点第二位</div>
<div id="t121" class="t" style="left:1662.70px;top:306.71px;height:22.50px;line-height:22.50px;font-size:15.00px;color:#222;font-weight:700;transform-origin:center center;transform:translateX(-50%) scaleX(1.0132);">小数点第三位</div>
<div id="t122" class="t" style="left:1763.00px;top:306.71px;height:22.50px;line-height:22.50px;font-size:15.00px;color:#222;font-weight:700;transform-origin:center center;transform:translateX(-50%) scaleX(1.0132);">小数点第四位</div>
<div id="t123" class="t" style="left:1160.00px;top:360.80px;height:24.75px;line-height:24.75px;font-size:16.50px;color:#222;font-weight:700;transform-origin:center center;transform:translateX(-50%) scaleX(1.0000);">-3</div>
<div id="t124" class="t" style="left:1260.60px;top:360.80px;height:24.75px;line-height:24.75px;font-size:16.50px;color:#222;font-weight:700;transform-origin:center center;transform:translateX(-50%) scaleX(1.0000);">-2</div>
<div id="t125" class="t" style="left:1361.10px;top:360.80px;height:24.75px;line-height:24.75px;font-size:16.50px;color:#222;font-weight:700;transform-origin:center center;transform:translateX(-50%) scaleX(1.0000);">-1</div>
<div id="t126" class="t" style="left:1461.30px;top:360.80px;height:24.75px;line-height:24.75px;font-size:16.50px;color:#222;font-weight:700;transform-origin:center center;transform:translateX(-50%) scaleX(1.0000);">0</div>
<div id="t127" class="t" style="left:1561.90px;top:360.80px;height:24.75px;line-height:24.75px;font-size:16.50px;color:#222;font-weight:700;transform-origin:center center;transform:translateX(-50%) scaleX(1.0000);">1</div>
<div id="t128" class="t" style="left:1662.70px;top:360.80px;height:24.75px;line-height:24.75px;font-size:16.50px;color:#222;font-weight:700;transform-origin:center center;transform:translateX(-50%) scaleX(1.0000);">2</div>
<div id="t129" class="t" style="left:1763.00px;top:360.80px;height:24.75px;line-height:24.75px;font-size:16.50px;color:#222;font-weight:700;transform-origin:center center;transform:translateX(-50%) scaleX(1.0000);">3</div>
<div id="t130" class="t" style="left:1013.40px;top:348.37px;height:22.50px;line-height:22.50px;font-size:15.00px;color:#222;font-weight:700;transform-origin:left center;transform:scaleX(0.9730);">桁数の</div>
<div id="t131" class="t" style="left:1013.40px;top:376.14px;height:22.50px;line-height:22.50px;font-size:15.00px;color:#222;font-weight:700;transform-origin:left center;transform:scaleX(0.9891);">指定入力値</div>
<div id="t132" class="t" style="left:1013.40px;top:402.46px;height:24.75px;line-height:24.75px;font-size:16.50px;color:#222;font-weight:700;transform-origin:left center;transform:scaleX(0.9939);">四捨五入</div>
<div id="t133" class="t" style="left:1014.40px;top:430.23px;height:24.75px;line-height:24.75px;font-size:16.50px;color:#222;font-weight:700;transform-origin:left center;transform:scaleX(0.9867);">になる桁数</div>
<div id="t134" class="t" style="left:1013.40px;top:459.45px;height:22.50px;line-height:22.50px;font-size:15.00px;color:#222;font-weight:700;transform-origin:left center;transform:scaleX(0.9797);">四捨五入</div>
<div id="t135" class="t" style="left:1015.60px;top:485.77px;height:24.75px;line-height:24.75px;font-size:16.50px;color:#222;font-weight:700;transform-origin:left center;transform:scaleX(0.9576);">した結果</div>
<div id="t136" class="t" style="left:1160.00px;top:416.34px;height:24.75px;line-height:24.75px;font-size:16.50px;color:#222;font-weight:700;transform-origin:center center;transform:translateX(-50%) scaleX(1.0596);">1 <span class="r">2</span>34.567</div>
<div id="t137" class="t" style="left:1260.60px;top:416.34px;height:24.75px;line-height:24.75px;font-size:16.50px;color:#222;font-weight:700;transform-origin:center center;transform:translateX(-50%) scaleX(1.0596);">12 <span class="r">3</span>4.567</div>
<div id="t138" class="t" style="left:1361.10px;top:416.34px;height:24.75px;line-height:24.75px;font-size:16.50px;color:#222;font-weight:700;transform-origin:center center;transform:translateX(-50%) scaleX(1.0594);">123 <span class="r">4</span>.567</div>
<div id="t139" class="t" style="left:1461.30px;top:416.34px;height:24.75px;line-height:24.75px;font-size:16.50px;color:#222;font-weight:700;transform-origin:center center;transform:translateX(-50%) scaleX(1.0596);">1234. <span class="r">5</span>67</div>
<div id="t140" class="t" style="left:1561.90px;top:416.34px;height:24.75px;line-height:24.75px;font-size:16.50px;color:#222;font-weight:700;transform-origin:center center;transform:translateX(-50%) scaleX(1.0594);">1234.5 <span class="r">6</span>7</div>
<div id="t141" class="t" style="left:1662.70px;top:416.34px;height:24.75px;line-height:24.75px;font-size:16.50px;color:#222;font-weight:700;transform-origin:center center;transform:translateX(-50%) scaleX(1.0596);">1234.56 <span class="r">7</span></div>
<div id="t142" class="t" style="left:1763.00px;top:416.34px;height:24.75px;line-height:24.75px;font-size:16.50px;color:#222;font-weight:700;transform-origin:center center;transform:translateX(-50%) scaleX(1.0655);">1234.567 <span class="r">8</span></div>
<div id="t143" class="t" style="left:1115.40px;top:459.45px;height:22.50px;line-height:22.50px;font-size:15.00px;color:#222;font-weight:700;transform-origin:left center;transform:scaleX(0.9962);"><span class="r b">2</span> を切り捨て</div>
<div id="t144" class="t" style="left:1215.80px;top:459.45px;height:22.50px;line-height:22.50px;font-size:15.00px;color:#222;font-weight:700;transform-origin:left center;transform:scaleX(0.9962);"><span class="r b">3</span> を切り捨て</div>
<div id="t145" class="t" style="left:1316.60px;top:459.45px;height:22.50px;line-height:22.50px;font-size:15.00px;color:#222;font-weight:700;transform-origin:left center;transform:scaleX(0.9962);"><span class="r b">4</span> を切り捨て</div>
<div id="t146" class="t" style="left:1416.80px;top:459.45px;height:22.50px;line-height:22.50px;font-size:15.00px;color:#222;font-weight:700;transform-origin:left center;transform:scaleX(0.9962);"><span class="r b">5</span> を切り上げ</div>
<div id="t147" class="t" style="left:1517.00px;top:459.45px;height:22.50px;line-height:22.50px;font-size:15.00px;color:#222;font-weight:700;transform-origin:left center;transform:scaleX(0.9962);"><span class="r b">6</span> を切り上げ</div>
<div id="t148" class="t" style="left:1618.00px;top:459.45px;height:22.50px;line-height:22.50px;font-size:15.00px;color:#222;font-weight:700;transform-origin:left center;transform:scaleX(0.9962);"><span class="r b">7</span> を切り上げ</div>
<div id="t149" class="t" style="left:1718.60px;top:459.45px;height:22.50px;line-height:22.50px;font-size:15.00px;color:#222;font-weight:700;transform-origin:left center;transform:scaleX(0.9962);"><span class="r b">8</span> を切り上げ</div>
<div id="t150" class="t" style="left:1114.40px;top:489.12px;height:18.00px;line-height:18.00px;font-size:12.00px;color:#222;font-weight:700;transform-origin:left center;transform:scaleX(1.0779);">1000となる</div>
<div id="t151" class="t" style="left:1214.80px;top:489.12px;height:18.00px;line-height:18.00px;font-size:12.00px;color:#222;font-weight:700;transform-origin:left center;transform:scaleX(1.0779);">1200となる</div>
<div id="t152" class="t" style="left:1315.60px;top:489.12px;height:18.00px;line-height:18.00px;font-size:12.00px;color:#222;font-weight:700;transform-origin:left center;transform:scaleX(1.0779);">1230となる</div>
<div id="t153" class="t" style="left:1415.80px;top:489.12px;height:18.00px;line-height:18.00px;font-size:12.00px;color:#222;font-weight:700;transform-origin:left center;transform:scaleX(1.0779);">1235となる</div>
<div id="t154" class="t" style="left:1516.00px;top:489.12px;height:18.00px;line-height:18.00px;font-size:12.00px;color:#222;font-weight:700;transform-origin:left center;transform:scaleX(1.1058);">1234.6となる</div>
<div id="t155" class="t" style="left:1617.00px;top:489.12px;height:18.00px;line-height:18.00px;font-size:12.00px;color:#222;font-weight:700;transform-origin:left center;transform:scaleX(1.1261);">1234.57となる</div>
<div id="t156" class="t" style="left:1717.60px;top:490.54px;height:15.60px;line-height:15.60px;font-size:10.40px;color:#222;font-weight:700;transform-origin:left center;transform:scaleX(1.1320);">1234.568となる</div>
<div class="a" style="left:1008.30px;top:289.86px;width:806.00px;height:2.60px;background:#333;"></div>
<div class="a" style="left:1008.30px;top:345.40px;width:806.00px;height:2.60px;background:#333;"></div>
<div class="a" style="left:1008.30px;top:400.94px;width:806.00px;height:2.60px;background:#333;"></div>
<div class="a" style="left:1008.30px;top:456.48px;width:806.00px;height:2.60px;background:#333;"></div>
<div class="a" style="left:1008.30px;top:512.02px;width:806.00px;height:2.60px;background:#333;"></div>
<div class="a" style="left:1008.30px;top:289.86px;width:2.60px;height:224.76px;background:#333;"></div>
<div class="a" style="left:1811.70px;top:289.86px;width:2.60px;height:224.76px;background:#333;"></div>
<div class="a" style="left:1108.70px;top:290.06px;width:2.20px;height:224.36px;background:#333;"></div>
<div class="a" style="left:1209.40px;top:290.36px;width:1.60px;height:223.76px;background:#7a7a7a;"></div>
<div class="a" style="left:1310.20px;top:290.36px;width:1.60px;height:223.76px;background:#7a7a7a;"></div>
<div class="a" style="left:1410.40px;top:290.36px;width:1.60px;height:223.76px;background:#7a7a7a;"></div>
<div class="a" style="left:1510.60px;top:290.36px;width:1.60px;height:223.76px;background:#7a7a7a;"></div>
<div class="a" style="left:1611.60px;top:290.36px;width:1.60px;height:223.76px;background:#7a7a7a;"></div>
<div class="a" style="left:1712.20px;top:290.36px;width:1.60px;height:223.76px;background:#7a7a7a;"></div>
<div class="a" style="left:1011.60px;top:373.68px;width:96.20px;height:1.60px;background:#ececec;"></div>
<div class="a" style="left:1011.60px;top:429.22px;width:96.20px;height:1.60px;background:#ececec;"></div>
<div class="a" style="left:1011.60px;top:484.76px;width:96.20px;height:1.60px;background:#ececec;"></div>
<div class="a" style="left:1111.80px;top:484.76px;width:699.20px;height:1.60px;background:#ececec;"></div>
<svg class="a" style="left:1009.60px;top:291.16px;" width="100.20" height="55.54" viewBox="0 0 50.10 27.77"><path d="M0.5 0.5L49.60 27.27" stroke="#444" stroke-width="0.7"/></svg>
<div class="a" style="left:1864.00px;top:234.00px;width:24.00px;height:823.60px;background:#e6e6e6;"></div>
<div class="a" style="left:1864.40px;top:263.40px;width:2.00px;height:793.20px;background:#cfcfcf;"></div>
<div class="a" style="left:1866.80px;top:256.00px;width:18.80px;height:784.00px;background:#dadada;"></div>
<div class="a" style="left:1866.80px;top:236.20px;width:18.80px;height:18.40px;background:#fff;border:1.00px solid #d0d0d0;"></div>
<svg class="a" style="left:1872.40px;top:241.60px;" width="7.20" height="4.80" viewBox="0 0 3.6 2.4"><path d="M0 2.4L1.8 0L3.6 2.4Z" fill="#555"/></svg>
<div class="a" style="left:1867.20px;top:255.40px;width:18.00px;height:754.60px;background:#fff;border:1.00px solid #d0d0d0;"></div>
<div class="a" style="left:1866.80px;top:1039.60px;width:18.80px;height:18.40px;background:#fff;border:1.00px solid #d0d0d0;"></div>
<svg class="a" style="left:1872.40px;top:1046.80px;" width="7.20" height="4.80" viewBox="0 0 3.6 2.4"><path d="M0 0L1.8 2.4L3.6 0Z" fill="#555"/></svg>
<div class="a" style="left:160.00px;top:1056.60px;width:1728.00px;height:24.80px;background:#e6e6e6;border-top:1.60px solid #c9c9c9;"></div>
<svg class="a" style="left:181.20px;top:1065.20px;" width="4.80" height="7.60" viewBox="0 0 2.4 3.8"><path d="M2.2 0.2L0.4 1.9L2.2 3.6" stroke="#b5b5b5" stroke-width="0.7" fill="none"/></svg>
<svg class="a" style="left:206.00px;top:1065.20px;" width="4.80" height="7.60" viewBox="0 0 2.4 3.8"><path d="M0.2 0.2L2 1.9L0.2 3.6" stroke="#b5b5b5" stroke-width="0.7" fill="none"/></svg>
<div class="a" style="left:242.80px;top:1056.60px;width:76.40px;height:23.20px;background:#fff;border-bottom:2.40px solid #217346;border-right:1.40px solid #c9c9c9;border-left:1.40px solid #c9c9c9;"></div>
<div id="t157" class="t" style="left:281.00px;top:1056.00px;height:22.20px;line-height:22.20px;font-size:14.80px;color:#217346;font-weight:400;transform-origin:center center;transform:translateX(-50%) scaleX(1.1342);">Sheet1</div>
<svg class="a" style="left:344.40px;top:1060.80px;" width="16.80" height="16.80" viewBox="0 0 8.4 8.4"><circle cx="4.2" cy="4.2" r="3.8" fill="none" stroke="#777" stroke-width="0.6"/><path d="M4.2 2.2V6.2M2.2 4.2H6.2" stroke="#777" stroke-width="0.6"/></svg>
<div class="a" style="left:1192.40px;top:1064.00px;width:1.60px;height:1.60px;background:#9a9a9a;"></div>
<div class="a" style="left:1192.40px;top:1068.40px;width:1.60px;height:1.60px;background:#9a9a9a;"></div>
<div class="a" style="left:1192.40px;top:1072.80px;width:1.60px;height:1.60px;background:#9a9a9a;"></div>
<div class="a" style="left:1203.60px;top:1060.40px;width:19.20px;height:17.20px;background:#fff;border:1.00px solid #d0d0d0;"></div>
<svg class="a" style="left:1210.80px;top:1066.00px;" width="4.40" height="6.80" viewBox="0 0 2.2 3.4"><path d="M2.2 0L0 1.7L2.2 3.4Z" fill="#555"/></svg>
<div class="a" style="left:1222.80px;top:1060.40px;width:624.20px;height:17.20px;background:#dadada;"></div>
<div class="a" style="left:1226.00px;top:1060.40px;width:585.20px;height:17.20px;background:#fff;border:1.00px solid #d0d0d0;"></div>
<div class="a" style="left:1847.00px;top:1060.40px;width:17.40px;height:17.20px;background:#fff;border:1.00px solid #d0d0d0;"></div>
<svg class="a" style="left:1854.00px;top:1065.80px;" width="4.40" height="6.80" viewBox="0 0 2.2 3.4"><path d="M0 0L2.2 1.7L0 3.4Z" fill="#555"/></svg>
<div class="a" style="left:160.00px;top:1080.00px;width:1728.00px;height:2.00px;background:#dadada;"></div>
<div class="a" style="left:160.00px;top:1081.20px;width:1728.00px;height:25.20px;background:#f3f3f3;"></div>
<div id="t158" class="t" style="left:168.40px;top:1084.53px;height:18.60px;line-height:18.60px;font-size:12.40px;color:#444;font-weight:400;transform-origin:left center;transform:scaleX(0.9846);">準備完了</div>
<svg class="a" style="left:1442.40px;top:1086.40px;" width="16.80" height="15.20" viewBox="0 0 8.4 7.6"><rect x="0.3" y="0.3" width="7" height="4.6" fill="#555"/><rect x="2.6" y="5" width="2.4" height="1" fill="#555"/><circle cx="6.4" cy="5.6" r="1.8" fill="#555" stroke="#f3f3f3" stroke-width="0.5"/></svg>
<div id="t159" class="t" style="left:1462.80px;top:1083.87px;height:19.20px;line-height:19.20px;font-size:12.80px;color:#444;font-weight:400;transform-origin:left center;transform:scaleX(1.0628);">表示設定</div>
<div class="a" style="left:1538.40px;top:1081.60px;width:45.20px;height:24.40px;background:#c9c9c9;"></div>
<svg class="a" style="left:1553.20px;top:1086.80px;" width="16.00" height="14.00" viewBox="0 0 8 7"><rect x="0.3" y="0.3" width="7.4" height="6.4" fill="none" stroke="#777" stroke-width="0.6"/><path d="M2.67 0.3V6.7" stroke="#777" stroke-width="0.5"/><path d="M5.33 0.3V6.7" stroke="#777" stroke-width="0.5"/><path d="M0.3 2.33H7.7" stroke="#777" stroke-width="0.5"/><path d="M0.3 4.67H7.7" stroke="#777" stroke-width="0.5"/></svg>
<svg class="a" style="left:1599.20px;top:1086.80px;" width="15.20" height="14.00" viewBox="0 0 7.6 7"><rect x="0.3" y="0.3" width="7" height="6.4" fill="none" stroke="#777" stroke-width="0.6"/><rect x="1.8" y="1.6" width="4" height="3.8" fill="none" stroke="#777" stroke-width="0.5"/></svg>
<svg class="a" style="left:1644.00px;top:1086.80px;" width="15.20" height="14.00" viewBox="0 0 7.6 7"><rect x="0.3" y="0.3" width="7" height="6.4" fill="none" stroke="#777" stroke-width="0.6"/><path d="M2 0.3V3.4H5.6V0.3" fill="none" stroke="#777" stroke-width="0.5"/></svg>
<div class="a" style="left:1682.80px;top:1093.20px;width:7.20px;height:1.40px;background:#777;"></div>
<div class="a" style="left:1697.20px;top:1093.20px;width:113.20px;height:1.40px;background:#a0a0a0;"></div>
<div class="a" style="left:1752.00px;top:1086.60px;width:4.60px;height:14.40px;background:#555;"></div>
<div class="a" style="left:1816.60px;top:1093.40px;width:8.00px;height:1.40px;background:#777;"></div>
<div class="a" style="left:1819.90px;top:1090.00px;width:1.40px;height:8.00px;background:#777;"></div>
<div id="t160" class="t" style="left:1840.80px;top:1084.64px;height:20.70px;line-height:20.70px;font-size:13.80px;color:#444;font-weight:400;transform-origin:left center;transform:scaleX(1.0539);">100%</div>
<div class="a" style="left:160.00px;top:1106.40px;width:1728.00px;height:61.60px;background:#1f3642;"></div>
<svg class="a" style="left:178.00px;top:1119.20px;" width="19.20" height="19.20" viewBox="0 0 9.6 9.6"><path d="M0 1.3L4.2 0.7V4.5H0ZM4.9 0.6L9.6 0V4.5H4.9ZM0 5.1H4.2V8.9L0 8.3ZM4.9 5.1H9.6V9.6L4.9 9Z" fill="#fff"/></svg>
<div class="a" style="left:214.80px;top:1106.40px;width:395.60px;height:61.60px;background:#f1f1f1;"></div>
<svg class="a" style="left:228.80px;top:1119.60px;" width="18.00" height="18.00" viewBox="0 0 9 9"><circle cx="5.4" cy="3.6" r="2.9" fill="none" stroke="#333" stroke-width="0.9"/><path d="M3.4 5.8L0.5 8.6" stroke="#333" stroke-width="1"/></svg>
<div id="t161" class="t" style="left:261.20px;top:1119.20px;height:22.20px;line-height:22.20px;font-size:14.80px;color:#333;font-weight:400;transform-origin:left center;transform:scaleX(0.9884);">ここに入力して検索</div>
<svg class="a" style="left:628.80px;top:1120.20px;" width="18.00" height="18.00" viewBox="0 0 9 9"><circle cx="4.5" cy="4.5" r="3.6" fill="none" stroke="#e8eef2" stroke-width="1.2"/></svg>
<svg class="a" style="left:682.00px;top:1120.80px;" width="22.00" height="16.80" viewBox="0 0 11 8.4"><rect x="2.2" y="1" width="5.8" height="6.4" fill="none" stroke="#c9d3d9" stroke-width="0.8"/><path d="M0.5 1V7.4M10 0.4V3M10 5V8" stroke="#c9d3d9" stroke-width="0.8"/></svg>
<svg class="a" style="left:739.40px;top:1117.20px;" width="26.00" height="23.20" viewBox="0 0 13 11.6"><path d="M0 1.2Q0 0.4 0.8 0.4H4.6L5.8 1.8H12.2Q13 1.8 13 2.6V11.2H0Z" fill="#f6c64a"/><rect x="0" y="3.4" width="13" height="7.8" fill="#fbd96b"/><rect x="2.4" y="6.6" width="8.2" height="4.6" fill="#3c8fd6"/><rect x="4" y="8.6" width="5" height="2.6" fill="#fbd96b"/></svg>
<svg class="a" style="left:796.40px;top:1116.40px;" width="25.60" height="24.80" viewBox="0 0 12.8 12.4"><rect x="0" y="0" width="12.8" height="12.4" fill="#1b6fd0"/><path d="M0 12.4V9L4.6 4.4L9 9.4L12.8 6.6V12.4Z" fill="#0b3f8a"/><path d="M0 12.4L4.6 4.4L9.6 12.4Z" fill="#104fa6"/><circle cx="8.6" cy="3.2" r="1.2" fill="#fff"/></svg>
<svg class="a" style="left:853.20px;top:1115.20px;" width="27.20" height="28.00" viewBox="0 0 13.6 14"><path d="M4.4 3.8V2.4Q4.4 0.5 6.8 0.5Q9.2 0.5 9.2 2.4V3.8" fill="none" stroke="#f3f3f3" stroke-width="0.9"/><rect x="0" y="3.6" width="13.6" height="10.2" fill="#f5f5f5"/><rect x="4.2" y="6" width="2.3" height="2.3" fill="#f25022"/><rect x="7" y="6" width="2.3" height="2.3" fill="#7fba00"/><rect x="4.2" y="8.8" width="2.3" height="2.3" fill="#00a4ef"/><rect x="7" y="8.8" width="2.3" height="2.3" fill="#ffb900"/></svg>
<svg class="a" style="left:909.80px;top:1115.20px;" width="29.20" height="28.40" viewBox="0 0 14.6 14.2"><circle cx="7.3" cy="7.1" r="6.9" fill="#1e7fd6"/><path d="M1 9.6A6.9 6.9 0 0 0 13.6 10Q10 12.4 7.4 10.4Q5.6 8.8 6.8 6.4Q3 5.6 1 9.6Z" fill="#0c4f9e"/><path d="M0.6 6A6.9 6.9 0 0 1 14.2 7.2Q14 9 12 9.2Q10 9 10.4 7.4Q10 4.4 6.6 4.4Q2.6 4.6 0.6 6Z" fill="#37c6a8"/></svg>
<svg class="a" style="left:969.20px;top:1116.80px;" width="25.20" height="24.00" viewBox="0 0 12.6 12"><path d="M4 0.4L12.2 1.6L8.8 11.6L0.4 9.8Z" fill="#d7e8f3"/><path d="M4 0.4L12.2 1.6L11.6 3.2L3.4 2Z" fill="#8fb7d4"/><path d="M8.8 11.6L12.2 1.6L12.6 4.6L10.2 11.8Z" fill="#9aa7af"/></svg>
<svg class="a" style="left:1025.40px;top:1115.60px;" width="27.20" height="27.20" viewBox="0 0 13.6 13.6"><circle cx="6.8" cy="6.8" r="6.8" fill="#fdf000"/></svg>
<div class="a" style="left:1016.60px;top:1149.40px;width:47.00px;height:18.60px;background:#9ccbe6;"></div>
<svg class="a" style="left:1085.00px;top:1117.20px;" width="24.00" height="24.80" viewBox="0 0 12 12.4"><path d="M5 0L6.4 4L10.4 2.6L7.4 5.8L10.6 8.4L6.6 7.8L5.8 11.6L4.2 7.6L0 8.6L3.2 5.8L0.4 2.4L4.2 4Z" fill="#a9c6e6"/><path d="M6 4.4L11.2 9.4L8.8 9.6L10 12L8.8 12.4L7.6 10L6 11.4Z" fill="#fff" stroke="#456" stroke-width="0.4"/></svg>
<svg class="a" style="left:1139.60px;top:1115.60px;" width="28.80" height="25.60" viewBox="0 0 14.4 12.8"><path d="M0 4.8L7.2 0L14.4 4.8V12.8H0Z" fill="#1a86dc"/><path d="M0.8 5.2H13.6V12H0.8Z" fill="#3aa5f2"/><path d="M0.8 5.2L7.2 10L13.6 5.2" fill="#eaf4fc"/><path d="M0 12.8L7.2 8L14.4 12.8Z" fill="#1673c4"/></svg>
<div class="a" style="left:1198.20px;top:1115.60px;width:27.60px;height:26.80px;background:#2a3238;"></div>
<svg class="a" style="left:1203.20px;top:1119.20px;" width="18.00" height="19.60" viewBox="0 0 9 9.8"><path d="M2.2 0.6L4.4 2.8L2.2 5L0 2.8Z" fill="#eafffb"/><path d="M3 6.2L6.2 3L9 5.8L5.8 9Z" fill="#35d5bd"/></svg>
<div class="a" style="left:1188.60px;top:1149.40px;width:46.80px;height:18.60px;background:#9ccbe6;"></div>
<div class="a" style="left:1242.00px;top:1106.40px;width:54.80px;height:61.60px;background:#4b5e69;"></div>
<svg class="a" style="left:1255.00px;top:1116.00px;" width="27.60" height="25.60" viewBox="0 0 13.8 12.8"><rect x="3.4" y="0" width="10.4" height="12.8" rx="0.8" fill="#21a366"/><rect x="8.6" y="0" width="5.2" height="4.2" fill="#33c481"/><rect x="8.6" y="8.4" width="5.2" height="4.4" fill="#185c37"/><rect x="3.4" y="4.2" width="5.2" height="4.2" fill="#107c41"/><rect x="0" y="2.8" width="7.4" height="7.4" rx="0.7" fill="#0f6f3a"/><path d="M2.2 4.6L5.2 8.4M5.2 4.6L2.2 8.4" stroke="#fff" stroke-width="0.9"/></svg>
<div class="a" style="left:1242.00px;top:1149.40px;width:54.80px;height:18.60px;background:#9ccbe6;"></div>
<svg class="a" style="left:1311.60px;top:1114.80px;" width="29.60" height="27.20" viewBox="0 0 14.8 13.6"><rect x="0" y="0.6" width="11" height="8.4" rx="1.2" fill="#2b9fe0"/><path d="M11 3.2L14.8 1.4V8.4L11 6.6Z" fill="#2b9fe0"/><circle cx="5.4" cy="4.8" r="2.3" fill="#fff"/><circle cx="5.4" cy="4.8" r="1.5" fill="#e8252b"/><path d="M5.4 9V12M2.8 12.4H8" stroke="#2b9fe0" stroke-width="0.8"/></svg>
<div class="a" style="left:1303.80px;top:1149.40px;width:46.80px;height:18.60px;background:#9ccbe6;"></div>
<svg class="a" style="left:1416.60px;top:1123.60px;" width="15.20" height="8.80" viewBox="0 0 7.6 4.4"><path d="M0.4 4L3.8 0.6L7.2 4" fill="none" stroke="#e8eef2" stroke-width="0.8"/></svg>
<svg class="a" style="left:1451.00px;top:1120.80px;" width="18.00" height="15.20" viewBox="0 0 9 7.6"><path d="M0.3 2.6H1.8L3.8 0.6V7L1.8 5H0.3Z" fill="none" stroke="#cfd8dd" stroke-width="0.6"/><path d="M5 2.4Q5.8 3.8 5 5.2M6.2 1.4Q7.6 3.8 6.2 6.2M7.4 0.6Q9.4 3.8 7.4 7" fill="none" stroke="#cfd8dd" stroke-width="0.5"/></svg>
<svg class="a" style="left:1491.80px;top:1120.00px;" width="14.80" height="17.20" viewBox="0 0 7.4 8.6"><rect x="0.4" y="2" width="4.8" height="4.6" fill="none" stroke="#cfd8dd" stroke-width="0.7"/><path d="M1.4 0.5H4.2M1.4 8.1H4.2M5.2 3H7V5.6H5.2" stroke="#cfd8dd" stroke-width="0.7" fill="none"/></svg>
<svg class="a" style="left:1523.80px;top:1118.00px;" width="20.00" height="20.00" viewBox="0 0 10 10"><circle cx="5" cy="5" r="4.6" fill="#e9eef1"/><path d="M1.4 6.4Q3 3.4 5.4 4.4Q7.6 5.4 8.8 4.2Q8.6 8 5 8.6Q2.4 8.4 1.4 6.4Z" fill="#5e6f79"/></svg>
<div id="t162" class="t" style="left:1550.00px;top:1110.73px;height:32.00px;line-height:32.00px;font-size:27.20px;color:#f4f7f8;font-weight:400;transform-origin:left center;transform:scaleX(0.9221);text-shadow:0 0 1.60px rgba(255,255,255,0.9),0 0 4.00px rgba(20,30,40,0.8);">2021&nbsp;saym.</div>
<div id="t163" class="t" style="left:1680.40px;top:1118.80px;height:22.20px;line-height:22.20px;font-size:14.80px;color:#e8eef2;font-weight:400;transform-origin:left center;transform:scaleX(0.8982);font-family:'Liberation Serif',serif;">A</div>
<svg class="a" style="left:1472.00px;top:1132.00px;left:1563.20px;top:1132.40px;" width="12.00" height="8.00" viewBox="0 0 6 4"><circle cx="2" cy="2" r="1.6" fill="#e0463c"/></svg>
<svg class="a" style="left:1709.00px;top:1118.00px;" width="22.00" height="22.00" viewBox="0 0 11 11"><circle cx="5" cy="5" r="4.6" fill="#1d72e0"/><circle cx="8.2" cy="8" r="1.9" fill="#f0b020"/><circle cx="7.6" cy="8.6" r="1.2" fill="#e0463c"/></svg>
<div id="t164" class="t" style="left:1783.80px;top:1109.47px;height:19.20px;line-height:19.20px;font-size:12.80px;color:#f1f4f6;font-weight:400;transform-origin:center center;transform:translateX(-50%) scaleX(1.0490);">14:10</div>
<div id="t165" class="t" style="left:1783.00px;top:1129.67px;height:19.20px;line-height:19.20px;font-size:12.80px;color:#f1f4f6;font-weight:400;transform-origin:center center;transform:translateX(-50%) scaleX(1.1364);">2021/05/29</div>
<svg class="a" style="left:1839.60px;top:1120.00px;" width="20.80" height="18.80" viewBox="0 0 10.4 9.4"><path d="M0.4 0.4H10V7H4.6L2.6 9V7H0.4Z" fill="#eef2f4"/><path d="M2.2 2.4H8.2M2.2 4.2H8.2" stroke="#1f3642" stroke-width="0.6"/><circle cx="8.6" cy="7.4" r="1.6" fill="#cfd8dd" stroke="#1f3642" stroke-width="0.4"/></svg>
<div class="a" style="left:1883.20px;top:1106.40px;width:1.40px;height:45.60px;background:#5f7480;"></div>
<div class="a" style="left:-16.00px;top:-16.00px;width:176.00px;height:1184.00px;background:#000;"></div>
<div class="a" style="left:1888.00px;top:-16.00px;width:176.00px;height:1184.00px;background:#000;"></div>
</div></div>
</body></html>
